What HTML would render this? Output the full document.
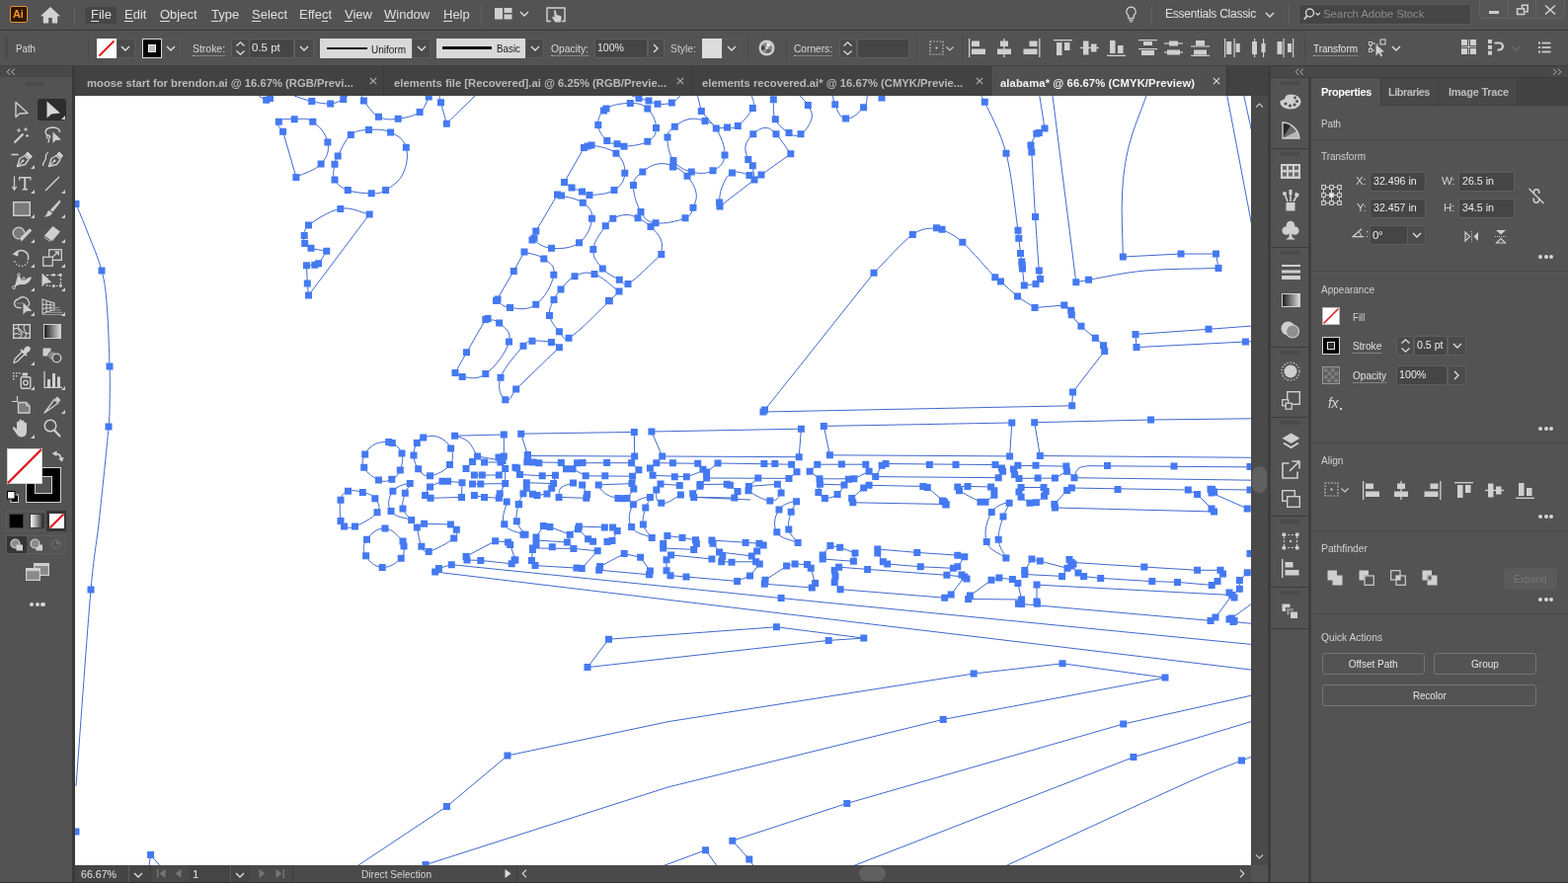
<!DOCTYPE html>
<html lang="en">
<head>
<meta charset="utf-8">
<title>alabama* @ 66.67% (CMYK/Preview)</title>
<style>
*{box-sizing:border-box;margin:0;padding:0}
html,body{width:1588px;height:894px;overflow:hidden;background:#535353}
body{position:relative;font-family:"Liberation Sans","DejaVu Sans",sans-serif;font-size:11px;color:#dcdcdc;-webkit-font-smoothing:antialiased}
.abs{position:absolute}
.t{position:absolute;white-space:nowrap;line-height:1}
svg{position:absolute;overflow:visible}
/* ---------- bars ---------- */
#menubar{left:0;top:0;width:1588px;height:30px;background:#535353}
#menuline{left:0;top:30px;width:1588px;height:1px;background:#383838}
#ctrlbar{left:0;top:31px;width:1588px;height:35px;background:#535353}
#tabbar{left:0;top:66px;width:1588px;height:31px;background:#424242}
#tools{left:0;top:67px;width:73px;height:827px;background:#535353}
#toolshead{left:0;top:67px;width:73px;height:11px;background:#484848}
#toolsgap{left:73px;top:67px;width:3px;height:827px;background:#3a3a3a}
#canvas{left:76px;top:97px;width:1191px;height:779px;background:#fff;overflow:hidden}
#vscroll{left:1267px;top:97px;width:17px;height:779px;background:#4a4a4a}
#status{left:76px;top:876px;width:1208px;height:17px;background:#4a4a4a}
#rgap{left:1284px;top:66px;width:304px;height:828px;background:#3d3d3d}
#rhead{left:1287px;top:67px;width:301px;height:11px;background:#484848}
#strip{left:1287px;top:79px;width:38px;height:815px;background:#535353}
#panel{left:1328px;top:79px;width:260px;height:815px;background:#535353}
.menu{font-size:13px;color:#e0e0e0;top:8px}
.menu u{text-decoration:underline;text-underline-offset:1px}
.lbl{font-size:11px;color:#d8d8d8}
.dot{border-bottom:1px dotted #bdbdbd;padding-bottom:1px}
.field{position:absolute;background:#454545;border:1px solid #5f5f5f;border-radius:2px;color:#e6e6e6;font-size:11px;line-height:1}
.field span{position:absolute;left:3px;top:4px;white-space:nowrap}
.tab{position:absolute;top:67px;height:30px;font-weight:bold;font-size:11.25px;color:#b9b9b9;border-right:1px solid #383838}
.tab span{position:absolute;top:11.5px;white-space:nowrap;line-height:1}
.sec{position:absolute;left:1338px;font-size:11px;color:#d0d0d0;white-space:nowrap;line-height:1}
.div{position:absolute;left:1329px;width:259px;height:1px;background:#484848}
.btn{position:absolute;border:1px solid #767676;border-radius:3px;height:22px;font-size:11px;color:#e6e6e6;text-align:center;line-height:20px}
.more i{position:absolute;width:3px;height:3px;border-radius:50%;background:#d6d6d6;top:0}
</style>
</head>
<body>
<!-- BASE LAYOUT -->
<div class="abs" id="menubar"></div>
<div class="abs" id="menuline"></div>
<div class="abs" id="ctrlbar"></div>
<div class="abs" id="tabbar"></div>
<div class="abs" id="tools"></div>
<div class="abs" id="toolshead"></div>
<div class="abs" id="toolsgap"></div>
<div class="abs" id="canvas"><svg style="left:0;top:0" width="1191" height="779" viewBox="76 97 1191 779">
<g fill="none" stroke="#3f68cf" stroke-width="1">
<path d="M77.0 206.5 C81.3 217.2 85.7 227.2 90.0 238.5 C94.3 249.8 99.7 261.3 103.0 274.0 C106.3 286.7 106.9 292.8 108.3 310.0 C109.7 327.2 110.5 355.8 111.0 371.0 C111.5 386.2 111.4 390.8 111.2 401.0 C111.0 411.2 111.4 415.5 110.0 432.0 C108.1 454.2 103.4 499.2 100.4 526.7 C97.4 554.2 95.3 559.4 92.0 597.0 C88.1 641.9 82.0 729.7 77.0 796.0"/>
<path d="M150.5 880.0 L152.6 865.6 L165.0 880.0"/>
<path d="M262.0 97.0 C264.6 98.4 267.3 100.8 269.7 101.3 C271.9 101.8 272.4 100.3 273.5 99.5 C274.6 98.7 275.2 97.8 276.0 97.0"/>
<path d="M298.0 97.0 C303.9 98.9 309.3 101.2 315.8 102.6 C322.3 104.0 328.8 105.4 334.7 105.0 C340.6 104.6 344.7 101.9 347.8 100.5 C350.4 99.3 350.6 98.2 352.0 97.0"/>
<path d="M366.5 97.0 C367.1 98.7 366.6 99.8 368.4 102.0 C371.5 105.8 376.8 114.7 383.5 118.2 C390.2 121.7 395.6 121.1 403.2 120.2 C410.8 119.3 419.1 117.7 425.1 113.4 C431.1 109.1 432.5 100.9 434.2 98.0 C434.5 97.5 434.4 97.3 434.5 97.0"/>
<path d="M445.0 97.0 C445.5 99.3 445.6 100.2 446.5 103.8 C447.7 108.5 450.4 118.1 452.3 125.2 L481.0 97.0"/>
<path d="M282.3 123.2 C285.7 119.5 292.0 120.7 298.2 120.7 C304.4 120.7 310.1 118.6 316.8 123.2 C323.5 127.8 330.2 135.3 331.9 144.1 C333.6 152.9 331.4 159.1 325.1 166.0 C318.8 172.9 308.3 174.9 299.9 179.4 L286.6 133.3 C285.2 129.9 278.9 126.9 282.3 123.2 Z"/>
<path d="M355.3 136.6 C361.4 131.5 366.2 132.0 373.5 131.5 C380.8 131.0 388.4 130.6 395.6 134.0 C402.8 137.4 408.8 140.6 411.3 149.2 C413.8 157.8 412.0 167.7 408.0 176.0 C404.0 184.3 396.5 188.8 390.6 192.5 C384.7 196.2 383.1 195.8 376.2 195.8 C369.3 195.8 359.2 195.1 352.3 192.5 C345.4 189.9 341.7 187.2 339.0 181.9 C336.3 176.6 338.4 170.6 339.0 166.3 C339.6 162.0 339.9 162.2 342.2 158.0 C345.1 152.7 349.2 141.7 355.3 136.6 Z"/>
<path d="M312.5 299.0 L374.2 216.9 C364.4 215.1 356.5 209.3 344.8 211.4 C333.1 213.5 319.5 222.8 312.5 228.0 C307.6 231.6 308.9 235.2 308.2 238.6 C307.5 242.0 307.3 244.1 308.7 246.6 C310.1 249.1 311.1 249.8 315.0 251.2 C319.0 252.6 325.5 253.2 330.7 254.2 C328.0 258.4 324.8 264.1 322.6 266.8 C321.2 268.5 320.9 267.9 318.8 268.3 C316.6 268.7 313.3 268.6 310.5 268.8 L311.3 287.0 C311.7 291.0 312.1 295.0 312.5 299.0 Z"/>
<path d="M614.0 110.0 C620.6 105.6 630.6 104.5 638.3 104.5 C646.0 104.5 650.6 105.0 655.8 110.0 C661.0 115.0 664.5 122.6 664.5 129.5 C664.5 136.4 662.2 139.6 655.8 143.3 C649.4 147.0 637.7 147.8 632.0 148.3 C628.0 148.6 627.9 146.8 625.0 145.8 C622.1 144.8 618.5 146.2 614.8 142.5 C611.1 138.8 606.0 133.3 605.8 126.5 C605.6 119.7 607.4 114.4 614.0 110.0 Z"/>
<path d="M640.0 97.0 C642.3 97.8 644.0 98.6 647.0 99.5 C650.0 100.4 653.6 101.0 657.0 102.0 C660.4 103.0 661.7 104.9 666.0 105.3 C670.3 105.7 676.0 105.6 680.3 104.0 C684.6 102.4 686.1 99.3 689.0 97.0"/>
<path d="M683.3 128.3 C687.3 124.9 692.2 121.6 698.0 120.5 C703.8 119.4 709.0 120.8 714.0 122.5 C719.0 124.2 721.7 123.7 725.3 130.0 C729.1 136.6 734.7 148.1 734.0 157.0 C733.3 165.9 728.8 169.4 722.0 172.8 C715.2 176.2 707.8 175.9 700.3 174.0 C692.8 172.1 686.7 169.3 682.0 162.5 C677.3 155.7 675.7 145.8 676.0 139.0 C676.3 132.2 679.3 131.7 683.3 128.3 Z"/>
<path d="M706.5 97.0 C707.8 102.2 709.0 107.3 710.3 112.5 L725.3 130.0 C729.0 129.7 732.8 129.4 736.5 129.0 C740.2 128.6 742.7 131.0 747.3 127.5 C752.3 123.7 759.5 115.4 762.3 109.5 C765.1 103.6 761.8 101.2 761.5 97.0"/>
<path d="M650.8 174.0 C655.3 170.0 660.1 167.1 666.0 166.0 C671.9 164.9 676.5 166.0 682.0 168.3 C687.5 170.6 691.8 173.4 696.0 178.3 C700.2 183.2 703.9 188.9 705.0 195.0 C706.1 201.1 704.0 205.6 702.0 210.3 C700.0 215.0 700.5 218.1 694.0 220.8 C686.6 223.8 672.9 227.0 664.0 225.8 C655.1 224.6 653.3 221.8 649.0 214.5 C644.7 207.2 641.1 195.7 641.5 187.5 C641.9 179.3 646.3 178.0 650.8 174.0 Z"/>
<path d="M783.0 97.0 C783.1 98.3 783.1 98.8 783.3 100.8 C783.7 104.8 782.3 114.4 785.3 120.8 C788.3 127.2 794.1 131.6 799.0 134.5 C803.9 137.4 806.0 138.9 811.0 135.8 C816.0 132.7 820.5 125.9 822.0 120.0 C823.5 114.1 820.5 110.7 818.3 106.5 C816.1 102.3 812.8 100.2 810.0 97.0"/>
<path d="M843.5 97.0 C844.3 99.9 843.4 101.6 845.8 105.8 C848.2 110.0 849.1 119.2 856.6 120.0 C864.1 120.8 870.4 113.2 874.6 108.8 C878.8 104.4 877.2 100.9 878.5 97.0"/>
<path d="M757.8 161.5 C756.5 157.9 754.0 153.0 755.0 148.0 C756.0 143.0 759.1 139.2 762.8 135.8 C766.5 132.4 770.1 129.5 775.0 129.5 C779.9 129.5 781.3 131.0 786.0 135.8 C790.7 140.6 795.9 149.1 800.8 155.8 L771.0 177.0 L764.0 182.0 C763.4 177.3 762.9 172.5 762.3 167.8 C760.8 165.7 759.1 165.1 757.8 161.5 Z"/>
<path d="M729.0 209.0 L764.0 182.0 C762.3 180.5 762.4 178.6 759.0 177.5 C754.8 176.2 747.6 172.3 741.5 175.0 C735.4 177.7 733.4 184.5 731.0 190.0 C728.6 195.5 728.9 201.6 728.5 205.0 C728.3 207.1 728.8 207.7 729.0 209.0 Z"/>
<path d="M591.5 149.5 L571.5 184.5 L579.0 190.0 C582.5 191.3 586.3 192.7 589.5 194.0 C592.7 195.3 592.6 197.7 597.0 197.5 C603.1 197.2 614.9 196.9 622.0 192.5 C629.1 188.1 632.4 183.0 632.8 175.3 C633.2 167.6 630.7 160.9 624.0 155.3 C617.3 149.7 605.2 148.1 599.0 147.0 C594.8 146.3 594.0 148.7 591.5 149.5 Z"/>
<path d="M564.5 197.0 L542.8 234.0 L539.0 243.0 C545.5 245.8 549.6 250.8 558.5 251.3 C567.4 251.8 578.2 251.9 586.5 245.8 C594.8 239.7 598.7 229.8 599.5 221.3 C600.3 212.8 596.3 209.8 590.3 205.3 C584.3 200.8 573.1 199.5 568.5 198.0 C566.4 197.3 565.8 197.3 564.5 197.0 Z"/>
<path d="M531.0 255.0 L520.3 274.5 L502.5 304.5 C507.2 306.8 509.0 310.8 516.5 311.5 C524.0 312.2 533.8 315.1 542.8 308.3 C551.8 301.5 559.1 288.4 560.8 278.3 C562.5 268.2 556.5 266.5 550.8 262.0 C545.1 257.5 537.6 257.3 531.0 255.0 Z"/>
<path d="M636.0 287.5 C631.6 290.2 631.7 286.0 627.3 283.3 C622.7 280.6 615.2 277.7 610.3 272.0 C605.4 266.3 600.2 261.4 600.8 252.5 C601.4 243.6 609.7 234.4 613.3 228.8 C616.4 224.0 617.0 223.4 620.8 221.3 C624.6 219.2 629.3 217.6 634.0 217.5 C638.7 217.4 641.5 218.6 646.0 220.8 C650.5 223.0 654.8 225.5 659.0 229.5 C663.2 233.5 667.5 237.7 669.5 243.0 C671.5 248.3 669.7 252.7 669.8 257.5 C658.5 267.5 645.6 281.7 636.0 287.5 Z"/>
<path d="M576.0 342.3 C570.7 345.5 569.9 339.9 566.4 335.7 C562.9 331.5 557.6 325.8 556.5 319.4 C555.4 313.0 558.9 308.1 561.0 303.4 C563.1 298.7 564.3 297.2 568.0 293.0 C571.7 288.8 575.5 282.6 582.0 279.7 C588.5 276.8 593.3 274.5 602.0 277.5 C610.7 280.5 618.7 289.2 627.0 295.0 L617.3 304.8 C603.5 317.3 588.4 334.8 576.0 342.3 Z"/>
<path d="M511.8 404.8 C507.2 401.4 503.4 393.1 507.0 382.3 C510.6 371.5 524.2 357.1 530.0 350.3 C533.6 346.1 533.7 345.9 539.0 345.2 C544.3 344.5 553.4 345.4 558.4 346.6 C563.3 347.8 563.7 350.0 566.4 351.7 L522.7 394.0 C519.1 397.6 516.4 408.2 511.8 404.8 Z"/>
<path d="M491.8 323.4 L472.5 356.8 L461.0 377.5 C463.4 378.8 463.8 381.3 468.2 381.5 C474.0 381.7 482.4 385.6 491.8 378.6 C501.2 371.6 512.5 357.3 515.5 346.0 C518.5 335.0 510.3 331.5 505.6 327.0 C500.9 322.5 496.4 324.6 491.8 323.4 Z"/>
<path d="M993.5 97.0 C994.8 99.1 995.7 99.7 997.3 103.3 C1001.8 113.6 1013.0 132.1 1019.0 155.3 C1025.0 178.5 1028.7 218.1 1031.0 233.3 C1031.6 237.5 1031.4 237.4 1031.8 241.3 C1032.2 245.2 1033.0 252.6 1033.5 256.5 C1034.0 260.4 1034.4 262.3 1034.8 265.0 C1035.2 267.7 1035.1 268.3 1035.5 272.0 C1035.9 276.0 1036.7 283.3 1037.3 289.0 L1049.0 287.5 C1050.5 285.8 1052.8 285.2 1053.5 282.5 C1054.2 279.8 1052.7 278.6 1052.3 274.0 C1051.4 262.9 1049.8 239.5 1048.5 219.5 C1047.2 199.5 1045.6 166.8 1044.8 154.0 C1044.6 150.2 1043.1 150.5 1044.0 147.0 C1044.9 143.5 1048.2 137.8 1049.8 135.3 C1050.6 134.1 1051.1 135.3 1052.3 134.5 C1053.8 133.5 1056.1 131.5 1058.0 130.0 L1052.8 97.0"/>
<path d="M1066.0 97.0 L1089.8 285.8 L1102.5 283.3"/>
<path d="M1161.0 97.0 C1155.2 113.7 1147.9 129.2 1143.5 147.0 C1139.1 164.8 1137.6 177.0 1136.5 197.0 C1135.4 217.0 1137.0 239.0 1137.3 260.0 L1196.0 257.0 L1231.5 257.0 L1234.0 271.5 C1209.3 272.3 1183.3 271.9 1160.0 274.0 C1136.7 276.1 1121.7 280.2 1102.5 283.3"/>
<path d="M1242.8 97.0 L1268.0 229.5"/>
<path d="M1259.8 97.0 L1268.0 134.5"/>
<path d="M1268.0 330.0 L1224.0 333.3 L1150.0 338.5 L1151.0 351.6 L1261.4 346.0 L1268.0 345.7"/>
<path d="M773.0 417.0 L885.0 276.3 C898.1 263.4 912.6 245.9 924.3 237.5 C935.2 229.7 943.0 231.8 948.5 230.8 C951.5 230.3 951.3 230.8 954.0 232.3 C958.7 234.9 965.2 236.6 974.8 245.3 C984.4 254.0 1000.9 273.7 1007.8 280.8 C1010.4 283.5 1010.6 282.6 1013.5 285.0 C1017.5 288.4 1024.4 295.3 1030.5 300.0 C1036.6 304.7 1042.2 307.7 1048.0 311.5 L1077.8 309.0 C1080.1 310.7 1083.2 312.3 1084.7 314.2 C1086.2 316.1 1084.0 316.7 1085.3 318.7 C1087.2 321.7 1090.7 326.1 1095.0 330.3 C1099.3 334.5 1105.5 339.1 1109.3 342.3 C1113.0 345.6 1115.7 347.3 1117.5 349.8 C1119.3 352.3 1118.3 353.5 1118.7 355.4 L1086.5 397.0 L1085.7 410.8 L773.0 417.0 Z"/>
<path d="M457.3 571.7 L444.4 575.4 L440.7 579.0 L1268.0 678.2"/>
<path d="M457.3 571.7 L791.1 605.6 L1268.0 652.5"/>
<path d="M616.5 647.2 L786.4 634.8 L874.8 646.1 L839.2 648.4 L595.0 675.6 C602.2 666.1 609.3 656.7 616.5 647.2 Z"/>
<path d="M1180.0 686.1 L1076.0 671.8 L986.2 682.0 L677.0 730.6 L514.0 765.0 L452.5 816.5 L360.0 878.0"/>
<path d="M1180.0 686.1 L955.2 728.4 L677.0 796.8 L431.0 875.5 L424.0 878.0"/>
<path d="M1268.0 704.0 L1137.7 733.0 L857.8 813.4 L741.8 851.2 L758.8 870.0 L764.0 878.0"/>
<path d="M668.0 878.0 L714.6 860.7 L727.0 878.0"/>
<path d="M1268.0 730.3 L1147.9 766.6 L860.8 878.0"/>
<path d="M1268.0 766.0 L1257.5 770.0 C1240.7 776.8 1233.5 778.5 1207.0 790.3 C1166.7 808.3 1079.5 848.8 1015.7 878.0"/>
<path d="M393.7 447.5 C395.7 447.4 395.8 447.1 397.3 448.4 C399.8 450.6 405.4 453.5 407.0 459.0 C408.6 464.5 407.2 471.0 405.3 476.0 C403.4 481.0 401.1 483.3 396.8 485.3 C392.5 487.3 389.0 488.3 383.5 486.0 C378.0 483.7 371.5 478.6 368.7 473.3 C365.9 468.0 367.5 464.6 369.7 460.0 C371.9 455.4 375.4 451.9 380.0 449.5 C384.6 447.1 390.6 447.7 393.7 447.5 Z"/>
<path d="M428.7 443.0 C424.6 444.1 424.1 445.0 422.3 448.4 C420.5 451.8 418.7 456.1 419.0 461.0 C419.3 465.9 420.5 470.8 423.7 474.8 C426.9 478.8 428.7 482.7 435.5 481.8 C442.3 480.9 451.1 476.4 455.5 470.6 C459.9 464.8 458.9 459.7 456.6 454.0 C454.3 448.3 449.5 444.7 444.0 442.5 C438.5 440.3 432.8 441.9 428.7 443.0 Z"/>
<path d="M352.5 497.3 C357.1 495.7 362.4 497.1 367.3 498.4 C372.2 499.7 376.8 500.5 379.8 504.7 C382.8 508.9 386.4 512.6 382.0 518.7 C377.5 525.0 365.7 530.3 359.5 533.0 C354.1 535.3 351.6 534.2 348.5 533.0 C345.4 531.8 345.5 530.9 345.0 527.4 C344.3 522.4 343.6 512.0 345.0 506.2 C346.4 500.4 347.9 498.9 352.5 497.3 Z"/>
<path d="M390.0 535.0 C381.8 534.6 375.5 540.4 371.5 546.2 C367.5 552.0 367.3 556.8 370.6 562.8 C373.9 568.8 379.6 573.9 387.2 574.4 C394.8 574.9 401.8 569.6 406.2 565.2 C410.6 560.8 408.7 556.0 409.0 552.9 C409.3 550.2 409.9 549.8 408.0 548.0 C404.3 544.5 398.2 535.4 390.0 535.0 Z"/>
<path d="M415.2 489.6 C413.1 489.3 402.0 491.3 397.9 497.3 C393.8 503.3 391.6 510.8 396.0 517.6 C400.4 524.4 409.8 523.5 416.7 526.5 C413.8 522.7 409.3 520.4 408.0 515.0 C406.7 509.6 409.0 503.8 410.3 499.2 C411.6 494.6 417.3 489.9 415.2 489.6 Z"/>
<path d="M422.3 533.9 L429.6 530.2 L456.4 531.0 C458.4 532.8 461.6 533.2 462.3 536.3 C463.0 539.4 463.5 542.0 459.7 545.0 C454.2 549.3 441.4 556.6 434.2 558.4 C429.6 559.6 429.0 557.5 426.9 553.2 C424.6 548.5 423.8 540.3 422.3 533.9 Z"/>
<path d="M435.5 493.0 C438.8 490.3 443.8 489.1 448.0 487.2 L453.6 487.2 L468.0 488.7 L467.5 503.4 L436.0 504.3 L430.6 501.6 C432.2 498.7 432.2 495.7 435.5 493.0 Z"/>
<path d="M483.5 462.0 C480.3 457.0 478.3 450.9 474.0 447.0 C469.7 443.1 465.1 443.1 460.6 441.2 L510.3 440.0 L510.3 462.0"/>
<path d="M534.4 460.4 L527.7 439.2 L642.3 437.4 L642.7 462.0 L534.4 461.5"/>
<path d="M670.7 462.0 L659.9 437.0 L811.4 434.2 L809.2 462.7 L670.7 462.0 Z"/>
<path d="M840.4 460.8 L834.3 431.4 L1024.8 428.0 L1022.6 461.9 L840.4 460.8 Z"/>
<path d="M1268.0 463.3 L1053.3 461.5 L1047.7 427.7 L1165.6 425.0 L1268.0 423.8"/>
<path d="M483.5 462.0 L478.5 467.4 L472.0 474.4"/>
<path d="M483.5 462.0 L509.0 466.5"/>
<path d="M490.5 468.0 L507.0 468.0"/>
<path d="M480.4 481.0 L505.3 481.0"/>
<path d="M478.5 490.0 L511.7 489.6"/>
<path d="M480.4 501.6 L490.5 503.4 L505.3 504.3"/>
<path d="M511.7 474.4 L511.7 489.6 L506.2 499.7"/>
<path d="M513.2 508.0 C512.4 515.6 507.0 523.2 510.8 530.7 C514.6 538.2 523.6 537.7 530.0 541.2"/>
<path d="M533.8 467.8 L568.3 468.4 L573.5 474.8 L580.0 474.8 L584.6 468.7 L639.6 468.7 L646.9 475.7 L640.5 482.2"/>
<path d="M526.5 480.4 L549.2 481.8 L562.4 481.3"/>
<path d="M580.0 474.8 L593.2 481.8 L640.5 482.2"/>
<path d="M533.3 488.7 L560.6 489.6 L562.4 481.3"/>
<path d="M558.7 494.2 L554.0 500.0"/>
<path d="M533.3 494.2 L539.4 500.3 L544.0 501.6 L554.0 500.0"/>
<path d="M566.0 503.4 C566.7 500.3 565.0 497.0 568.0 494.0 C571.0 491.0 576.3 490.7 580.5 489.0"/>
<path d="M566.0 503.4 L593.8 504.3"/>
<path d="M589.7 490.9 L594.7 500.6"/>
<path d="M606.2 490.9 L640.0 489.6 L641.8 495.1 L635.0 504.5"/>
<path d="M606.2 493.0 C609.1 495.7 611.4 498.9 615.0 501.0 C618.6 503.1 622.3 503.3 626.0 504.5"/>
<path d="M530.0 499.7 C528.4 503.3 526.4 505.4 525.2 510.4 C524.0 515.4 522.0 521.9 523.3 527.8 C524.6 533.7 529.1 536.7 532.0 541.2"/>
<path d="M658.4 503.4 C656.3 502.9 645.5 504.3 641.4 510.8 C637.3 517.3 635.4 526.0 639.6 533.5 C643.8 541.0 653.3 540.9 660.2 544.6 C657.3 540.1 652.6 536.9 651.4 531.0 C650.2 525.1 652.5 518.9 653.8 514.0 C655.1 509.1 660.5 503.9 658.4 503.4 Z"/>
<path d="M670.7 462.0 L664.8 468.7 L658.4 473.9 L661.1 481.3 L695.3 482.7"/>
<path d="M664.8 468.7 L706.7 469.3 L711.9 475.2 L715.6 484.0 L709.0 492.3 L701.7 499.7"/>
<path d="M669.0 490.0 L688.3 491.4"/>
<path d="M669.0 490.0 C667.6 492.0 664.6 492.1 664.8 496.0 C665.0 500.0 662.8 507.9 669.8 509.3 C676.8 510.7 682.9 503.8 689.4 501.0"/>
<path d="M702.7 503.4 L760.0 506.0"/>
<path d="M695.3 482.7 C698.9 481.5 703.0 480.3 706.0 479.0 C709.0 477.7 709.9 476.5 711.9 475.2"/>
<path d="M543.0 544.0 L550.4 532.6 L556.9 533.5 C563.7 536.1 570.4 538.6 577.2 541.2"/>
<path d="M543.0 544.0 L543.0 551.4 L539.4 556.4 L538.5 567.4 L542.0 572.6 L589.2 575.4 L605.2 557.8 L580.9 555.4 L539.4 555.0"/>
<path d="M543.0 547.0 L574.4 549.0 L577.2 541.2 L586.4 533.0 L612.3 533.9"/>
<path d="M585.5 535.7 L595.6 545.8 L600.6 548.2"/>
<path d="M620.6 533.9 L625.2 537.5 L620.0 547.5 L615.0 548.6"/>
<path d="M607.6 573.5 L632.2 560.6 L648.6 564.3 L658.4 578.0 L657.5 581.8 L606.7 577.2 C607.0 576.0 607.3 574.7 607.6 573.5 Z"/>
<path d="M671.7 550.5 L675.9 542.5 L691.0 544.4 L704.5 546.8 L705.4 550.5 L702.7 556.4 L671.7 555.0 C671.7 553.5 671.7 552.0 671.7 550.5 Z"/>
<path d="M720.9 566.0 L679.6 561.9 L675.0 566.7 L675.0 577.8 L679.0 582.7 L695.0 584.0 L746.6 588.4"/>
<path d="M715.6 478.0 C719.4 475.0 723.2 472.0 727.0 469.0 L801.6 470.2 L807.0 477.8 L799.0 484.4 L715.6 484.0"/>
<path d="M709.0 490.5 L736.2 490.2 L739.4 491.3 L747.0 497.4 L743.8 504.0 L702.7 503.4"/>
<path d="M758.4 492.4 L787.4 490.2 C788.6 493.1 793.0 494.9 791.1 499.0 C789.2 503.1 786.9 507.5 779.8 507.0 C772.7 506.5 762.9 500.2 758.0 496.8 C756.1 495.5 758.3 493.9 758.4 492.4 Z"/>
<path d="M758.4 492.4 L767.8 484.1"/>
<path d="M806.6 507.7 C804.6 507.3 793.2 509.4 789.0 516.0 C784.8 522.6 782.5 531.1 786.8 538.7 C791.1 546.3 801.0 546.0 808.1 549.6 C805.0 545.1 800.1 542.1 798.8 536.0 C797.5 529.9 799.8 523.3 801.2 518.2 C802.6 513.1 808.6 508.1 806.6 507.7 Z"/>
<path d="M820.1 477.2 C822.7 474.9 825.2 472.5 827.8 470.2 L876.8 470.2 L880.1 477.2 L886.7 482.6 L1011.2 483.7"/>
<path d="M820.1 477.2 C823.4 479.7 826.7 482.3 830.0 484.8 L864.9 484.8 C870.0 482.3 875.0 479.7 880.1 477.2"/>
<path d="M886.7 482.6 L893.2 471.3 L897.1 469.5 L1008.0 470.6"/>
<path d="M830.4 490.2 L855.0 490.9 L859.4 485.2"/>
<path d="M830.4 490.2 L828.9 498.5 C831.1 500.5 831.3 504.0 835.4 504.4 C839.5 504.8 844.4 503.1 848.1 500.5 C851.8 497.9 852.7 494.1 855.0 490.9"/>
<path d="M862.7 504.4 C866.7 500.9 870.7 497.5 874.7 494.0 L880.1 491.3 L934.9 492.4 L939.3 493.5 L956.3 508.0 L958.0 510.5 L863.8 508.8"/>
<path d="M720.9 547.0 L768.9 550.2 L773.2 552.0 L766.7 557.9 L761.3 562.9 L728.5 559.0 L722.0 550.2"/>
<path d="M728.5 559.0 L731.8 563.3 L730.7 568.8 L765.6 568.8 L769.3 571.0 L759.5 583.0 C755.2 584.8 750.9 586.6 746.6 588.4"/>
<path d="M775.0 587.3 L796.6 573.1 L805.1 571.0 L817.5 571.6 L821.2 575.3 L825.6 590.6 L822.3 595.0 L774.3 591.2 C774.5 589.9 774.8 588.6 775.0 587.3 Z"/>
<path d="M833.2 562.0 C834.7 559.4 838.3 555.6 840.9 552.4 L850.7 554.2 C855.8 556.1 860.9 558.1 866.0 560.0 L864.4 568.3 L833.2 566.0 C833.2 564.7 832.1 563.9 833.2 562.0 Z"/>
<path d="M888.8 556.0 L928.8 559.4 L969.8 562.2 L976.8 563.7 L969.8 573.8 L965.4 575.3 L932.3 573.8 L898.7 571.0 L894.3 568.8 L888.8 560.0 C888.8 558.7 888.8 557.3 888.8 556.0 Z"/>
<path d="M849.6 574.2 L878.6 576.4 L958.9 582.3"/>
<path d="M849.6 574.2 L845.2 577.5 L845.2 589.5 L851.1 596.7 L956.7 605.2 L963.2 602.0 L976.8 584.0 L958.9 582.3"/>
<path d="M1008.0 470.6 C1010.2 471.7 1013.0 472.7 1014.5 474.0 C1015.9 475.2 1016.2 475.5 1015.6 477.2 C1014.9 479.2 1012.7 481.5 1011.2 483.7"/>
<path d="M969.8 492.9 L980.0 492.4 L1003.6 493.0 L1006.9 496.8 L1006.9 501.2 L998.0 508.3 L993.0 508.3 C985.8 504.5 975.9 499.7 971.5 496.8 C969.6 495.5 970.4 494.2 969.8 492.9 Z"/>
<path d="M1022.1 509.2 C1020.1 508.5 1009.0 510.6 1004.3 518.6 C999.6 526.6 996.1 538.6 999.2 548.5 C1002.3 558.4 1012.3 559.5 1018.9 565.0 C1016.3 558.8 1011.7 554.2 1011.2 546.3 C1010.7 538.4 1014.1 529.6 1016.0 523.0 C1017.9 516.4 1024.0 509.9 1022.1 509.2 Z"/>
<path d="M1032.0 484.4 C1030.5 483.1 1028.6 482.2 1027.6 480.4 C1026.6 478.6 1025.8 477.0 1026.5 475.0 C1027.2 473.0 1029.4 472.5 1030.9 471.3 L1079.9 472.1 L1080.6 477.2 C1076.5 479.5 1072.5 481.8 1068.4 484.1 L1032.0 484.4"/>
<path d="M1080.6 477.2 L1088.0 483.7 C1089.3 480.6 1089.2 476.9 1092.0 474.5 C1094.8 472.1 1098.7 472.6 1102.0 471.7 L1268.0 472.9"/>
<path d="M1088.0 483.7 L1268.0 486.2"/>
<path d="M1034.1 493.5 L1057.0 493.5 C1057.7 494.8 1059.1 495.7 1059.2 497.4 C1059.3 499.1 1059.3 500.1 1057.5 502.2 C1055.7 504.3 1052.1 506.6 1049.4 508.8 L1042.9 509.2 C1040.0 507.2 1036.2 505.4 1034.1 503.3 C1032.0 501.2 1032.0 499.8 1032.0 497.9 C1032.0 496.0 1033.4 495.0 1034.1 493.5 Z"/>
<path d="M1067.9 510.5 L1080.6 496.4 L1085.4 494.0 L1203.3 496.0 L1212.6 500.6 L1227.0 515.0 L1229.5 518.0 L1068.5 514.0 C1068.3 512.8 1068.1 511.7 1067.9 510.5 Z"/>
<path d="M1268.0 496.0 L1227.7 495.5 L1227.0 499.0 L1263.2 514.9 L1268.0 515.5"/>
<path d="M982.4 603.0 L1004.0 587.3 L1011.9 585.1 L1025.4 586.6 L1030.9 590.6 L1034.6 607.0 L980.7 606.5 C981.3 605.3 981.8 604.2 982.4 603.0 Z"/>
<path d="M1037.8 577.5 C1040.2 573.7 1042.6 569.9 1045.0 566.1 L1053.3 568.1 L1081.0 575.3 L1085.0 569.4 L1158.8 574.0 L1212.6 577.3 L1236.0 577.3 L1238.5 581.0 L1233.0 588.6 L1227.2 592.4 L1192.5 589.4 L1166.8 588.6 L1114.7 585.4 L1097.6 583.6 L1092.0 580.1 L1085.0 573.0"/>
<path d="M1037.8 581.5 L1075.6 583.4 L1081.0 575.3"/>
<path d="M1050.0 609.0 L1050.0 592.1 L1247.8 602.5 L1231.0 625.1 L1226.0 628.4 L1034.6 611.5"/>
<path d="M1268.0 579.0 L1263.2 579.8 L1255.4 587.4 L1255.4 596.2 L1247.8 602.5"/>
<path d="M1268.0 611.0 L1247.3 626.0 L1249.0 629.5 L1268.0 631.4"/>
<path d="M472.0 563.4 L501.6 547.7 L514.5 549.0 L516.7 551.4 L521.9 567.0 L518.2 570.8 L486.8 567.4 L473.0 567.0 C472.7 565.8 472.3 564.6 472.0 563.4 Z"/>
</g>
<path fill="#4479f2" d="M73.5 203.0h7v7h-7zM99.5 270.5h7v7h-7zM107.5 367.5h7v7h-7zM106.5 428.5h7v7h-7zM88.5 593.5h7v7h-7zM149.1 862.1h7v7h-7zM266.2 97.8h7v7h-7zM270.0 96.0h7v7h-7zM312.3 99.1h7v7h-7zM331.2 101.5h7v7h-7zM344.3 97.0h7v7h-7zM364.9 98.5h7v7h-7zM380.0 114.7h7v7h-7zM399.7 116.7h7v7h-7zM421.6 109.9h7v7h-7zM430.7 94.5h7v7h-7zM443.0 100.3h7v7h-7zM448.8 121.7h7v7h-7zM278.8 119.7h7v7h-7zM294.7 117.2h7v7h-7zM313.3 119.7h7v7h-7zM328.4 140.6h7v7h-7zM321.6 162.5h7v7h-7zM296.4 175.9h7v7h-7zM283.1 129.8h7v7h-7zM351.8 133.1h7v7h-7zM370.0 128.0h7v7h-7zM392.1 130.5h7v7h-7zM407.8 145.7h7v7h-7zM387.1 189.0h7v7h-7zM372.7 192.3h7v7h-7zM348.8 189.0h7v7h-7zM335.5 178.4h7v7h-7zM335.5 162.8h7v7h-7zM338.7 154.5h7v7h-7zM309.0 295.5h7v7h-7zM370.7 213.4h7v7h-7zM341.3 207.9h7v7h-7zM309.0 224.5h7v7h-7zM304.7 235.1h7v7h-7z"/>
<path fill="#4479f2" d="M305.2 243.1h7v7h-7zM311.5 247.7h7v7h-7zM327.2 250.7h7v7h-7zM319.1 263.3h7v7h-7zM315.3 264.8h7v7h-7zM307.0 265.3h7v7h-7zM307.8 283.5h7v7h-7zM610.5 106.5h7v7h-7zM634.8 101.0h7v7h-7zM652.3 106.5h7v7h-7zM661.0 126.0h7v7h-7zM652.3 139.8h7v7h-7zM628.5 144.8h7v7h-7zM621.5 142.3h7v7h-7zM611.3 139.0h7v7h-7zM602.3 123.0h7v7h-7zM643.5 96.0h7v7h-7zM653.5 98.5h7v7h-7zM662.5 101.8h7v7h-7zM676.8 100.5h7v7h-7zM679.8 124.8h7v7h-7zM710.5 119.0h7v7h-7zM721.8 126.5h7v7h-7zM730.5 153.5h7v7h-7zM718.5 169.3h7v7h-7zM696.8 170.5h7v7h-7zM678.5 159.0h7v7h-7zM672.5 135.5h7v7h-7zM706.8 109.0h7v7h-7zM733.0 125.5h7v7h-7zM743.8 124.0h7v7h-7zM758.8 106.0h7v7h-7zM647.3 170.5h7v7h-7zM678.5 164.8h7v7h-7zM692.5 174.8h7v7h-7zM698.5 206.8h7v7h-7zM690.5 217.3h7v7h-7zM660.5 222.3h7v7h-7zM645.5 211.0h7v7h-7zM638.0 184.0h7v7h-7z"/>
<path fill="#4479f2" d="M779.8 97.3h7v7h-7zM781.8 117.3h7v7h-7zM795.5 131.0h7v7h-7zM807.5 132.3h7v7h-7zM814.8 103.0h7v7h-7zM842.3 102.3h7v7h-7zM853.1 116.5h7v7h-7zM871.1 105.3h7v7h-7zM754.3 158.0h7v7h-7zM759.3 132.3h7v7h-7zM782.5 132.3h7v7h-7zM797.3 152.3h7v7h-7zM767.5 173.5h7v7h-7zM760.5 178.5h7v7h-7zM758.8 164.3h7v7h-7zM725.5 205.5h7v7h-7zM755.5 174.0h7v7h-7zM738.0 171.5h7v7h-7zM725.0 201.5h7v7h-7zM588.0 146.0h7v7h-7zM568.0 181.0h7v7h-7zM575.5 186.5h7v7h-7zM586.0 190.5h7v7h-7zM593.5 194.0h7v7h-7zM618.5 189.0h7v7h-7zM629.3 171.8h7v7h-7zM620.5 151.8h7v7h-7zM595.5 143.5h7v7h-7zM561.0 193.5h7v7h-7zM539.3 230.5h7v7h-7zM535.5 239.5h7v7h-7zM555.0 247.8h7v7h-7zM583.0 242.3h7v7h-7zM596.0 217.8h7v7h-7zM586.8 201.8h7v7h-7zM565.0 194.5h7v7h-7zM527.5 251.5h7v7h-7zM516.8 271.0h7v7h-7zM499.0 301.0h7v7h-7zM513.0 308.0h7v7h-7z"/>
<path fill="#4479f2" d="M539.3 304.8h7v7h-7zM557.3 274.8h7v7h-7zM547.3 258.5h7v7h-7zM632.5 284.0h7v7h-7zM623.8 279.8h7v7h-7zM606.8 268.5h7v7h-7zM597.3 249.0h7v7h-7zM609.8 225.3h7v7h-7zM617.3 217.8h7v7h-7zM642.5 217.3h7v7h-7zM655.5 226.0h7v7h-7zM666.3 254.0h7v7h-7zM572.5 338.8h7v7h-7zM562.9 332.2h7v7h-7zM553.0 315.9h7v7h-7zM557.5 299.9h7v7h-7zM564.5 289.5h7v7h-7zM578.5 276.2h7v7h-7zM598.5 274.0h7v7h-7zM623.5 291.5h7v7h-7zM613.8 301.3h7v7h-7zM508.3 401.3h7v7h-7zM503.5 378.8h7v7h-7zM526.5 346.8h7v7h-7zM535.5 341.7h7v7h-7zM554.9 343.1h7v7h-7zM562.9 348.2h7v7h-7zM519.2 390.5h7v7h-7zM488.3 319.9h7v7h-7zM469.0 353.3h7v7h-7zM457.5 374.0h7v7h-7zM464.7 378.0h7v7h-7zM488.3 375.1h7v7h-7zM512.0 342.5h7v7h-7zM502.1 323.5h7v7h-7zM993.8 99.8h7v7h-7zM1015.5 151.8h7v7h-7zM1027.5 229.8h7v7h-7zM1028.3 237.8h7v7h-7zM1030.0 253.0h7v7h-7z"/>
<path fill="#4479f2" d="M1031.3 261.5h7v7h-7zM1032.0 268.5h7v7h-7zM1033.8 285.5h7v7h-7zM1045.5 284.0h7v7h-7zM1050.0 279.0h7v7h-7zM1048.8 270.5h7v7h-7zM1045.0 216.0h7v7h-7zM1041.3 150.5h7v7h-7zM1040.5 143.5h7v7h-7zM1046.3 131.8h7v7h-7zM1048.8 131.0h7v7h-7zM1054.5 126.5h7v7h-7zM1086.3 282.3h7v7h-7zM1099.0 279.8h7v7h-7zM1133.8 256.5h7v7h-7zM1192.5 253.5h7v7h-7zM1228.0 253.5h7v7h-7zM1230.5 268.0h7v7h-7zM1220.5 329.8h7v7h-7zM1146.5 335.0h7v7h-7zM1147.5 348.1h7v7h-7zM1257.9 342.5h7v7h-7zM769.5 413.5h7v7h-7zM881.5 272.8h7v7h-7zM920.8 234.0h7v7h-7zM945.0 227.3h7v7h-7zM950.5 228.8h7v7h-7zM971.3 241.8h7v7h-7zM1004.3 277.3h7v7h-7zM1010.0 281.5h7v7h-7zM1027.0 296.5h7v7h-7zM1044.5 308.0h7v7h-7zM1074.3 305.5h7v7h-7zM1081.2 310.7h7v7h-7zM1081.8 315.2h7v7h-7zM1091.5 326.8h7v7h-7zM1105.8 338.8h7v7h-7zM1114.0 346.3h7v7h-7zM1115.2 351.9h7v7h-7zM1083.0 393.5h7v7h-7z"/>
<path fill="#4479f2" d="M1082.2 407.3h7v7h-7zM453.8 568.2h7v7h-7zM440.9 571.9h7v7h-7zM437.2 575.5h7v7h-7zM787.6 602.1h7v7h-7zM613.0 643.7h7v7h-7zM782.9 631.3h7v7h-7zM871.3 642.6h7v7h-7zM835.7 644.9h7v7h-7zM591.5 672.1h7v7h-7zM1176.5 682.6h7v7h-7zM1072.5 668.3h7v7h-7zM982.7 678.5h7v7h-7zM510.5 761.5h7v7h-7zM449.0 813.0h7v7h-7zM951.7 724.9h7v7h-7zM427.5 872.0h7v7h-7zM1134.2 729.5h7v7h-7zM854.3 809.9h7v7h-7zM738.3 847.7h7v7h-7zM755.3 866.5h7v7h-7zM711.1 857.2h7v7h-7zM1144.4 763.1h7v7h-7zM1254.0 766.5h7v7h-7zM390.2 444.0h7v7h-7zM393.8 444.9h7v7h-7zM403.5 455.5h7v7h-7zM401.8 472.5h7v7h-7zM393.3 481.8h7v7h-7zM380.0 482.5h7v7h-7zM365.2 469.8h7v7h-7zM366.2 456.5h7v7h-7zM425.2 439.5h7v7h-7zM418.8 444.9h7v7h-7zM415.5 457.5h7v7h-7zM420.2 471.3h7v7h-7zM432.0 478.3h7v7h-7zM452.0 467.1h7v7h-7zM453.1 450.5h7v7h-7zM349.0 493.8h7v7h-7z"/>
<path fill="#4479f2" d="M363.8 494.9h7v7h-7zM376.3 501.2h7v7h-7zM378.5 515.2h7v7h-7zM356.0 529.5h7v7h-7zM345.0 529.5h7v7h-7zM341.5 523.9h7v7h-7zM341.5 502.7h7v7h-7zM386.5 531.5h7v7h-7zM368.0 542.7h7v7h-7zM367.1 559.3h7v7h-7zM383.7 570.9h7v7h-7zM402.7 561.7h7v7h-7zM405.5 549.4h7v7h-7zM404.5 544.5h7v7h-7zM411.7 486.1h7v7h-7zM394.4 493.8h7v7h-7zM392.5 514.1h7v7h-7zM413.2 523.0h7v7h-7zM404.5 511.5h7v7h-7zM406.8 495.7h7v7h-7zM418.8 530.4h7v7h-7zM426.1 526.7h7v7h-7zM452.9 527.5h7v7h-7zM458.8 532.8h7v7h-7zM456.2 541.5h7v7h-7zM430.7 554.9h7v7h-7zM423.4 549.7h7v7h-7zM432.0 489.5h7v7h-7zM444.5 483.7h7v7h-7zM450.1 483.7h7v7h-7zM464.5 485.2h7v7h-7zM464.0 499.9h7v7h-7zM432.5 500.8h7v7h-7zM427.1 498.1h7v7h-7zM480.0 458.5h7v7h-7zM457.1 437.7h7v7h-7zM506.8 436.5h7v7h-7zM506.8 458.5h7v7h-7zM530.9 456.9h7v7h-7zM524.2 435.7h7v7h-7z"/>
<path fill="#4479f2" d="M638.8 433.9h7v7h-7zM639.2 458.5h7v7h-7zM530.9 458.0h7v7h-7zM667.2 458.5h7v7h-7zM656.4 433.5h7v7h-7zM807.9 430.7h7v7h-7zM805.7 459.2h7v7h-7zM836.9 457.3h7v7h-7zM830.8 427.9h7v7h-7zM1021.3 424.5h7v7h-7zM1019.1 458.4h7v7h-7zM1049.8 458.0h7v7h-7zM1044.2 424.2h7v7h-7zM1162.1 421.5h7v7h-7zM475.0 463.9h7v7h-7zM468.5 470.9h7v7h-7zM505.5 463.0h7v7h-7zM487.0 464.5h7v7h-7zM503.5 464.5h7v7h-7zM476.9 477.5h7v7h-7zM501.8 477.5h7v7h-7zM475.0 486.5h7v7h-7zM508.2 486.1h7v7h-7zM476.9 498.1h7v7h-7zM487.0 499.9h7v7h-7zM501.8 500.8h7v7h-7zM508.2 470.9h7v7h-7zM502.7 496.2h7v7h-7zM509.7 504.5h7v7h-7zM507.3 527.2h7v7h-7zM526.5 537.7h7v7h-7zM530.3 464.3h7v7h-7zM564.8 464.9h7v7h-7zM570.0 471.3h7v7h-7zM576.5 471.3h7v7h-7zM581.1 465.2h7v7h-7zM636.1 465.2h7v7h-7zM643.4 472.2h7v7h-7zM637.0 478.7h7v7h-7zM523.0 476.9h7v7h-7z"/>
<path fill="#4479f2" d="M545.7 478.3h7v7h-7zM558.9 477.8h7v7h-7zM589.7 478.3h7v7h-7zM529.8 485.2h7v7h-7zM557.1 486.1h7v7h-7zM555.2 490.7h7v7h-7zM550.5 496.5h7v7h-7zM529.8 490.7h7v7h-7zM535.9 496.8h7v7h-7zM540.5 498.1h7v7h-7zM562.5 499.9h7v7h-7zM577.0 485.5h7v7h-7zM590.3 500.8h7v7h-7zM586.2 487.4h7v7h-7zM591.2 497.1h7v7h-7zM602.7 487.4h7v7h-7zM636.5 486.1h7v7h-7zM638.3 491.6h7v7h-7zM631.5 501.0h7v7h-7zM622.5 501.0h7v7h-7zM526.5 496.2h7v7h-7zM521.7 506.9h7v7h-7zM519.8 524.3h7v7h-7zM528.5 537.7h7v7h-7zM654.9 499.9h7v7h-7zM637.9 507.3h7v7h-7zM636.1 530.0h7v7h-7zM656.7 541.1h7v7h-7zM647.9 527.5h7v7h-7zM650.3 510.5h7v7h-7zM661.3 465.2h7v7h-7zM654.9 470.4h7v7h-7zM657.6 477.8h7v7h-7zM691.8 479.2h7v7h-7zM703.2 465.8h7v7h-7zM708.4 471.7h7v7h-7zM712.1 480.5h7v7h-7zM705.5 488.8h7v7h-7zM698.2 496.2h7v7h-7zM665.5 486.5h7v7h-7z"/>
<path fill="#4479f2" d="M684.8 487.9h7v7h-7zM661.3 492.5h7v7h-7zM666.3 505.8h7v7h-7zM685.9 497.5h7v7h-7zM699.2 499.9h7v7h-7zM539.5 540.5h7v7h-7zM546.9 529.1h7v7h-7zM553.4 530.0h7v7h-7zM573.7 537.7h7v7h-7zM539.5 547.9h7v7h-7zM535.9 552.9h7v7h-7zM535.0 563.9h7v7h-7zM538.5 569.1h7v7h-7zM585.7 571.9h7v7h-7zM601.7 554.3h7v7h-7zM577.4 551.9h7v7h-7zM535.9 551.5h7v7h-7zM539.5 543.5h7v7h-7zM570.9 545.5h7v7h-7zM582.9 529.5h7v7h-7zM608.8 530.4h7v7h-7zM582.0 532.2h7v7h-7zM592.1 542.3h7v7h-7zM597.1 544.7h7v7h-7zM617.1 530.4h7v7h-7zM621.7 534.0h7v7h-7zM616.5 544.0h7v7h-7zM611.5 545.1h7v7h-7zM604.1 570.0h7v7h-7zM628.7 557.1h7v7h-7zM645.1 560.8h7v7h-7zM654.9 574.5h7v7h-7zM654.0 578.3h7v7h-7zM603.2 573.7h7v7h-7zM668.2 547.0h7v7h-7zM672.4 539.0h7v7h-7zM687.5 540.9h7v7h-7zM701.0 543.3h7v7h-7zM701.9 547.0h7v7h-7zM699.2 552.9h7v7h-7z"/>
<path fill="#4479f2" d="M668.2 551.5h7v7h-7zM717.4 562.5h7v7h-7zM676.1 558.4h7v7h-7zM671.5 563.2h7v7h-7zM671.5 574.3h7v7h-7zM675.5 579.2h7v7h-7zM691.5 580.5h7v7h-7zM743.1 584.9h7v7h-7zM712.1 474.5h7v7h-7zM723.5 465.5h7v7h-7zM798.1 466.7h7v7h-7zM803.5 474.3h7v7h-7zM795.5 480.9h7v7h-7zM705.5 487.0h7v7h-7zM732.7 486.7h7v7h-7zM735.9 487.8h7v7h-7zM743.5 493.9h7v7h-7zM740.3 500.5h7v7h-7zM754.9 488.9h7v7h-7zM783.9 486.7h7v7h-7zM787.6 495.5h7v7h-7zM776.3 503.5h7v7h-7zM754.5 493.3h7v7h-7zM764.3 480.6h7v7h-7zM803.1 504.2h7v7h-7zM785.5 512.5h7v7h-7zM783.3 535.2h7v7h-7zM804.6 546.1h7v7h-7zM795.3 532.5h7v7h-7zM797.7 514.7h7v7h-7zM816.6 473.7h7v7h-7zM824.3 466.7h7v7h-7zM873.3 466.7h7v7h-7zM876.6 473.7h7v7h-7zM883.2 479.1h7v7h-7zM1007.7 480.2h7v7h-7zM826.5 481.3h7v7h-7zM861.4 481.3h7v7h-7zM889.7 467.8h7v7h-7zM893.6 466.0h7v7h-7z"/>
<path fill="#4479f2" d="M1004.5 467.1h7v7h-7zM826.9 486.7h7v7h-7zM851.5 487.4h7v7h-7zM855.9 481.7h7v7h-7zM825.4 495.0h7v7h-7zM831.9 500.9h7v7h-7zM844.6 497.0h7v7h-7zM859.2 500.9h7v7h-7zM871.2 490.5h7v7h-7zM876.6 487.8h7v7h-7zM931.4 488.9h7v7h-7zM935.8 490.0h7v7h-7zM952.8 504.5h7v7h-7zM954.5 507.0h7v7h-7zM860.3 505.3h7v7h-7zM717.4 543.5h7v7h-7zM765.4 546.7h7v7h-7zM769.7 548.5h7v7h-7zM763.2 554.4h7v7h-7zM757.8 559.4h7v7h-7zM725.0 555.5h7v7h-7zM718.5 546.7h7v7h-7zM728.3 559.8h7v7h-7zM727.2 565.3h7v7h-7zM762.1 565.3h7v7h-7zM765.8 567.5h7v7h-7zM756.0 579.5h7v7h-7zM771.5 583.8h7v7h-7zM793.1 569.6h7v7h-7zM801.6 567.5h7v7h-7zM814.0 568.1h7v7h-7zM817.7 571.8h7v7h-7zM822.1 587.1h7v7h-7zM818.8 591.5h7v7h-7zM770.8 587.7h7v7h-7zM829.7 558.5h7v7h-7zM837.4 548.9h7v7h-7zM847.2 550.7h7v7h-7zM862.5 556.5h7v7h-7zM860.9 564.8h7v7h-7z"/>
<path fill="#4479f2" d="M829.7 562.5h7v7h-7zM885.3 552.5h7v7h-7zM925.3 555.9h7v7h-7zM966.3 558.7h7v7h-7zM973.3 560.2h7v7h-7zM966.3 570.3h7v7h-7zM961.9 571.8h7v7h-7zM928.8 570.3h7v7h-7zM895.2 567.5h7v7h-7zM890.8 565.3h7v7h-7zM885.3 556.5h7v7h-7zM846.1 570.7h7v7h-7zM875.1 572.9h7v7h-7zM955.4 578.8h7v7h-7zM841.7 574.0h7v7h-7zM841.7 586.0h7v7h-7zM847.6 593.2h7v7h-7zM953.2 601.7h7v7h-7zM959.7 598.5h7v7h-7zM973.3 580.5h7v7h-7zM1011.0 470.5h7v7h-7zM1012.1 473.7h7v7h-7zM966.3 489.4h7v7h-7zM976.5 488.9h7v7h-7zM1000.1 489.5h7v7h-7zM1003.4 493.3h7v7h-7zM1003.4 497.7h7v7h-7zM994.5 504.8h7v7h-7zM989.5 504.8h7v7h-7zM968.0 493.3h7v7h-7zM1018.6 505.7h7v7h-7zM1000.8 515.1h7v7h-7zM995.7 545.0h7v7h-7zM1015.4 561.5h7v7h-7zM1007.7 542.8h7v7h-7zM1012.5 519.5h7v7h-7zM1028.5 480.9h7v7h-7zM1024.1 476.9h7v7h-7zM1023.0 471.5h7v7h-7zM1027.4 467.8h7v7h-7z"/>
<path fill="#4479f2" d="M1076.4 468.6h7v7h-7zM1077.1 473.7h7v7h-7zM1064.9 480.6h7v7h-7zM1084.5 480.2h7v7h-7zM1030.6 490.0h7v7h-7zM1053.5 490.0h7v7h-7zM1055.7 493.9h7v7h-7zM1054.0 498.7h7v7h-7zM1045.9 505.3h7v7h-7zM1039.4 505.7h7v7h-7zM1030.6 499.8h7v7h-7zM1028.5 494.4h7v7h-7zM1064.4 507.0h7v7h-7zM1077.1 492.9h7v7h-7zM1081.9 490.5h7v7h-7zM1199.8 492.5h7v7h-7zM1209.1 497.1h7v7h-7zM1223.5 511.5h7v7h-7zM1226.0 514.5h7v7h-7zM1065.0 510.5h7v7h-7zM1224.2 492.0h7v7h-7zM1223.5 495.5h7v7h-7zM1259.7 511.4h7v7h-7zM978.9 599.5h7v7h-7zM1000.5 583.8h7v7h-7zM1008.4 581.6h7v7h-7zM1021.9 583.1h7v7h-7zM1027.4 587.1h7v7h-7zM1031.1 603.5h7v7h-7zM977.2 603.0h7v7h-7zM1034.3 574.0h7v7h-7zM1041.5 562.6h7v7h-7zM1049.8 564.6h7v7h-7zM1077.5 571.8h7v7h-7zM1081.5 565.9h7v7h-7zM1155.3 570.5h7v7h-7zM1209.1 573.8h7v7h-7zM1232.5 573.8h7v7h-7zM1235.0 577.5h7v7h-7zM1229.5 585.1h7v7h-7z"/>
<path fill="#4479f2" d="M1223.7 588.9h7v7h-7zM1189.0 585.9h7v7h-7zM1163.3 585.1h7v7h-7zM1111.2 581.9h7v7h-7zM1094.1 580.1h7v7h-7zM1088.5 576.6h7v7h-7zM1081.5 569.5h7v7h-7zM1034.3 578.0h7v7h-7zM1072.1 579.9h7v7h-7zM1046.5 605.5h7v7h-7zM1046.5 588.6h7v7h-7zM1244.3 599.0h7v7h-7zM1227.5 621.6h7v7h-7zM1222.5 624.9h7v7h-7zM1031.1 608.0h7v7h-7zM1259.7 576.3h7v7h-7zM1251.9 583.9h7v7h-7zM1251.9 592.7h7v7h-7zM1243.8 622.5h7v7h-7zM1245.5 626.0h7v7h-7zM468.5 559.9h7v7h-7zM498.1 544.2h7v7h-7zM511.0 545.5h7v7h-7zM513.2 547.9h7v7h-7zM518.4 563.5h7v7h-7zM514.7 567.3h7v7h-7zM483.3 563.9h7v7h-7zM469.5 563.5h7v7h-7zM73.5 838.5h7v7h-7zM608.0 108.5h7v7h-7zM678.0 165.5h7v7h-7zM889.5 95.5h7v7h-7zM591.5 144.5h7v7h-7zM537.5 237.5h7v7h-7zM500.5 299.5h7v7h-7zM613.0 301.0h7v7h-7zM490.5 319.0h7v7h-7zM1031.7 265.0h7v7h-7zM771.0 411.5h7v7h-7zM501.5 459.5h7v7h-7z"/>
<path fill="#4479f2" d="M484.8 477.5h7v7h-7zM483.3 486.5h7v7h-7zM518.4 469.8h7v7h-7zM522.1 507.3h7v7h-7zM536.5 464.5h7v7h-7zM542.3 465.2h7v7h-7zM586.5 464.9h7v7h-7zM611.1 464.9h7v7h-7zM520.2 470.4h7v7h-7zM609.3 478.3h7v7h-7zM627.2 501.2h7v7h-7zM677.9 465.2h7v7h-7zM679.8 479.2h7v7h-7zM555.8 550.3h7v7h-7zM580.5 571.5h7v7h-7zM517.5 563.5h7v7h-7zM770.4 466.0h7v7h-7zM781.3 466.0h7v7h-7zM848.9 466.5h7v7h-7zM751.6 546.1h7v7h-7zM737.5 565.7h7v7h-7zM842.5 580.0h7v7h-7zM970.5 578.5h7v7h-7zM975.5 582.5h7v7h-7zM937.9 467.1h7v7h-7zM964.5 467.1h7v7h-7zM951.0 503.5h7v7h-7zM954.5 507.5h7v7h-7zM1045.5 467.8h7v7h-7zM1047.6 480.6h7v7h-7zM1128.5 492.0h7v7h-7zM1118.0 468.1h7v7h-7zM1185.5 468.5h7v7h-7zM1262.5 469.0h7v7h-7zM1262.5 492.5h7v7h-7zM1262.5 556.9h7v7h-7zM1222.5 491.8h7v7h-7zM1226.0 494.5h7v7h-7zM1079.5 563.0h7v7h-7zM1083.5 567.5h7v7h-7z"/>
<path fill="#4479f2" d="M1028.0 607.8h7v7h-7zM1046.9 607.8h7v7h-7zM1241.5 596.5h7v7h-7zM1246.5 601.5h7v7h-7zM1241.5 623.5h7v7h-7zM1246.5 625.0h7v7h-7z"/>
</svg>
</div>
<div class="abs" id="vscroll"></div>
<div class="abs" id="status"></div>
<div class="abs" id="rgap"></div>
<div class="abs" id="rhead"></div>
<div class="abs" id="strip"></div>
<div class="abs" id="panel"></div>
<div class="abs" id="botline" style="left:0;top:893px;width:1588px;height:1px;background:#2e2e2e"></div>
<div id="ui" style="position:absolute;left:0;top:0;width:1588px;height:894px;will-change:transform">
<!-- MENU BAR -->
<div class="abs" style="left:10px;top:6px;width:18px;height:17px;background:#2e1603;border:1.5px solid #e8912d;border-radius:2px"></div>
<div class="t" style="left:13px;top:9px;font-size:11px;font-weight:bold;color:#f29a30;letter-spacing:-0.3px">Ai</div>
<svg style="left:41px;top:7px" width="20" height="17" viewBox="0 0 20 17"><path d="M10 0 L20 9.2 L17.2 9.2 L17.2 16.5 L11.8 16.5 L11.8 11 L8.2 11 L8.2 16.5 L2.8 16.5 L2.8 9.2 L0 9.2 Z" fill="#d2d2d2"/></svg>
<div class="abs" style="left:75px;top:5px;width:1px;height:20px;background:#626262"></div>
<div class="abs" style="left:86px;top:7px;width:32px;height:17px;background:#464646;border-radius:2px"></div>
<div class="t menu" style="left:92px">File</div>
<div class="t menu" style="left:126px">Edit</div>
<div class="t menu" style="left:162px">Object</div>
<div class="t menu" style="left:214px">Type</div>
<div class="t menu" style="left:255px">Select</div>
<div class="t menu" style="left:303px">Effect</div>
<div class="t menu" style="left:349px">View</div>
<div class="t menu" style="left:389px">Window</div>
<div class="t menu" style="left:449px">Help</div>
<!--UL-->
<div class="abs" style="left:92.0px;top:21px;width:8.0px;height:1px;background:#e0e0e0"></div>
<div class="abs" style="left:126.0px;top:21px;width:8.7px;height:1px;background:#e0e0e0"></div>
<div class="abs" style="left:162.0px;top:21px;width:10.1px;height:1px;background:#e0e0e0"></div>
<div class="abs" style="left:214.0px;top:21px;width:7.2px;height:1px;background:#e0e0e0"></div>
<div class="abs" style="left:255.0px;top:21px;width:8.7px;height:1px;background:#e0e0e0"></div>
<div class="abs" style="left:325.9px;top:21px;width:6.5px;height:1px;background:#e0e0e0"></div>
<div class="abs" style="left:349.0px;top:21px;width:8.4px;height:1px;background:#e0e0e0"></div>
<div class="abs" style="left:389.0px;top:21px;width:12.3px;height:1px;background:#e0e0e0"></div>
<div class="abs" style="left:449.0px;top:21px;width:9.4px;height:1px;background:#e0e0e0"></div>
<!--/UL-->
<div class="abs" style="left:487px;top:5px;width:1px;height:20px;background:#626262"></div>
<svg style="left:501px;top:8px" width="18" height="12" viewBox="0 0 18 12"><rect x="0" y="0" width="8" height="11.5" fill="#cfcfcf"/><rect x="9.5" y="0" width="8" height="5" fill="#cfcfcf"/><rect x="9.5" y="6.5" width="8" height="5" fill="#cfcfcf"/></svg>
<svg style="left:526px;top:11px" width="10" height="6" viewBox="0 0 10 6"><path d="M1 1 L5 5 L9 1" fill="none" stroke="#dedede" stroke-width="1.4"/></svg>
<svg style="left:553px;top:7px" width="20" height="16" viewBox="0 0 20 16"><path d="M5 14.5 H1 V1 H19 V14.5 H16" fill="none" stroke="#cfcfcf" stroke-width="1.5"/><path d="M8.2 3.5 q1.2 -0.8 1.8 0.5 l0.6 4 l4 1 q1.3 0.6 1 2 l-0.8 4.5 h-5.5 l-3 -4.5 q-0.4 -1.2 1 -1.2 l1.2 1 z" fill="#cfcfcf"/></svg>
<!-- right side -->
<svg style="left:1139px;top:6px" width="13" height="18" viewBox="0 0 14 19"><path d="M7 1 a5 5 0 0 1 3 9 v3 h-6 v-3 a5 5 0 0 1 3 -9 z" fill="none" stroke="#d6d6d6" stroke-width="1.3"/><path d="M4.5 15 h5 M5.5 17 h3" stroke="#d6d6d6" stroke-width="1.2"/></svg>
<div class="abs" style="left:1166px;top:5px;width:1px;height:20px;background:#626262"></div>
<div class="t" style="left:1180px;top:8px;font-size:12px;color:#e0e0e0;letter-spacing:-0.26px">Essentials Classic</div>
<svg style="left:1281px;top:12px" width="10" height="6" viewBox="0 0 10 6"><path d="M1 1 L5 5 L9 1" fill="none" stroke="#dedede" stroke-width="1.4"/></svg>
<div class="abs" style="left:1305px;top:5px;width:1px;height:20px;background:#626262"></div>
<div class="abs" style="left:1315px;top:4px;width:175px;height:21px;background:#454545;border:1px solid #5c5c5c;border-radius:3px"></div>
<svg style="left:1320px;top:8px" width="18" height="13" viewBox="0 0 18 13"><circle cx="6.5" cy="5" r="4" fill="none" stroke="#d2d2d2" stroke-width="1.5"/><path d="M3.8 8 L0.8 11.6" stroke="#d2d2d2" stroke-width="1.7"/><path d="M12.5 5 l2.2 2.2 l2.2 -2.2" fill="none" stroke="#d2d2d2" stroke-width="1.1"/></svg>
<div class="t" style="left:1340px;top:9px;font-size:11.5px;color:#8c8c8c;letter-spacing:-0.1px">Search Adobe Stock</div>
<div class="abs" style="left:1498px;top:-2px;width:87px;height:21px;background:#575757;border:1px solid #636363;border-radius:0 0 4px 4px"></div>
<div class="abs" style="left:1527px;top:0;width:1px;height:18px;background:#636363"></div>
<div class="abs" style="left:1555px;top:0;width:1px;height:18px;background:#636363"></div>
<div class="abs" style="left:1508px;top:10.500px;width:10px;height:3px;background:#cdcdcd"></div>
<svg style="left:1535px;top:4px" width="14" height="12" viewBox="0 0 14 12"><path d="M6.500 4 V1.200 H12.200 V7.800 H9.500" fill="none" stroke="#cdcdcd" stroke-width="1.600"/><rect x="1.600" y="4.900" width="7" height="5.600" fill="none" stroke="#cdcdcd" stroke-width="1.600"/></svg>
<svg style="left:1564px;top:5px" width="12" height="10" viewBox="0 0 12 10"><path d="M1 0.500 L11 9.500 M11 0.500 L1 9.500" stroke="#d2d2d2" stroke-width="1.500"/></svg>

<!-- CONTROL BAR -->
<div class="abs" style="left:5px;top:38px;width:3px;height:21px;background:repeating-linear-gradient(to bottom,#434343 0,#434343 1px,#535353 1px,#535353 2px)"></div>
<div class="t lbl" style="left:16px;top:43.5px;font-size:11.5px;transform:scaleX(0.845);transform-origin:0 0;">Path</div>
<div class="abs" style="left:89px;top:35px;width:1px;height:28px;background:#4a4a4a"></div>
<svg style="left:98px;top:39px" width="20" height="20" viewBox="0 0 20 20"><rect width="20" height="20" fill="#fff"/><path d="M2.5 17.5 L17.5 2.5" stroke="#e0161a" stroke-width="1.8"/></svg>
<div class="abs" style="left:118px;top:39px;width:19px;height:20px;background:#4b4b4b;border:1px solid #5a5a5a;border-radius:0px;"></div>
<svg style="left:122px;top:46px" width="10" height="6" viewBox="0 0 10 6"><path d="M1 1 L5.0 5 L9 1" fill="none" stroke="#dedede" stroke-width="1.4"/></svg>
<svg style="left:144px;top:39px" width="20" height="20" viewBox="0 0 20 20"><rect x="0.5" y="0.5" width="19" height="19" fill="#000" stroke="#d8d8d8"/><rect x="6.5" y="6.5" width="7" height="7" fill="#bdbdbd" stroke="#f2f2f2"/></svg>
<div class="abs" style="left:164px;top:39px;width:19px;height:20px;background:#535353;border:1px solid #5a5a5a;border-radius:0px;"></div>
<svg style="left:168px;top:46px" width="10" height="6" viewBox="0 0 10 6"><path d="M1 1 L5.0 5 L9 1" fill="none" stroke="#dedede" stroke-width="1.4"/></svg>
<div class="t" style="left:195px;top:43.5px;font-size:11.5px;color:#d8d8d8;transform:scaleX(0.907);transform-origin:0 0"><span class="dot">Stroke:</span></div>
<div class="abs" style="left:234px;top:39px;width:19px;height:20px;background:#4b4b4b;border:1px solid #5e5e5e;border-radius:2px;"></div>
<svg style="left:238px;top:41px" width="11" height="16" viewBox="0 0 11 16"><path d="M1.5 5.5 L5.5 1.8 L9.5 5.5 M1.5 10.5 L5.5 14.2 L9.5 10.5" fill="none" stroke="#dedede" stroke-width="1.3"/></svg>
<div class="abs" style="left:252px;top:39px;width:46px;height:20px;background:#454545;border:1px solid #5e5e5e;border-radius:2px;"></div>
<div class="t" style="left:255px;top:43px;font-size:11.5px;color:#e6e6e6;transform:scaleX(1.0);transform-origin:0 0">0.5 pt</div>
<div class="abs" style="left:298px;top:39px;width:20px;height:20px;background:#4b4b4b;border:1px solid #5e5e5e;border-radius:2px;"></div>
<svg style="left:303px;top:46px" width="10" height="6" viewBox="0 0 10 6"><path d="M1 1 L5.0 5 L9 1" fill="none" stroke="#dedede" stroke-width="1.4"/></svg>
<div class="abs" style="left:324px;top:39px;width:93px;height:20px;background:#d9d9d9"></div>
<div class="abs" style="left:331px;top:47.5px;width:41px;height:2.6px;background:#111"></div>
<div class="t" style="left:376px;top:45px;font-size:11.5px;color:#1a1a1a;transform:scaleX(0.868);transform-origin:0 0">Uniform</div>
<div class="abs" style="left:417px;top:39px;width:19px;height:20px;background:#4b4b4b;border:1px solid #5e5e5e;border-radius:2px;"></div>
<svg style="left:422px;top:46px" width="10" height="6" viewBox="0 0 10 6"><path d="M1 1 L5.0 5 L9 1" fill="none" stroke="#dedede" stroke-width="1.4"/></svg>
<div class="abs" style="left:442px;top:39px;width:90px;height:20px;background:#d9d9d9"></div>
<div class="abs" style="left:448px;top:47px;width:50px;height:2.6px;background:#111"></div>
<div class="t" style="left:503px;top:43.5px;font-size:11.5px;color:#1a1a1a;transform:scaleX(0.854);transform-origin:0 0">Basic</div>
<div class="abs" style="left:532px;top:39px;width:19px;height:20px;background:#4b4b4b;border:1px solid #5e5e5e;border-radius:2px;"></div>
<svg style="left:537px;top:46px" width="10" height="6" viewBox="0 0 10 6"><path d="M1 1 L5.0 5 L9 1" fill="none" stroke="#dedede" stroke-width="1.4"/></svg>
<div class="t" style="left:558px;top:43.5px;font-size:11.5px;color:#d8d8d8;transform:scaleX(0.9);transform-origin:0 0"><span class="dot">Opacity:</span></div>
<div class="abs" style="left:602px;top:39px;width:54px;height:20px;background:#454545;border:1px solid #5e5e5e;border-radius:2px;"></div>
<div class="t" style="left:605px;top:43px;font-size:11.5px;color:#e6e6e6;transform:scaleX(0.918);transform-origin:0 0">100%</div>
<div class="abs" style="left:656px;top:39px;width:17px;height:20px;background:#4b4b4b;border:1px solid #5e5e5e;border-radius:2px;"></div>
<svg style="left:661px;top:44px" width="6" height="10" viewBox="0 0 6 10"><path d="M1 1 L5 5 L1 9" fill="none" stroke="#dedede" stroke-width="1.4"/></svg>
<div class="t" style="left:679px;top:43.5px;font-size:11.5px;color:#c9c9c9;transform:scaleX(0.9);transform-origin:0 0">Style:</div>
<div class="abs" style="left:711px;top:39px;width:20px;height:20px;background:#dcdcdc"></div>
<div class="abs" style="left:731px;top:39px;width:19px;height:20px;background:#535353;border:1px solid #5a5a5a;border-radius:0px;"></div>
<svg style="left:736px;top:46px" width="10" height="6" viewBox="0 0 10 6"><path d="M1 1 L5.0 5 L9 1" fill="none" stroke="#dedede" stroke-width="1.4"/></svg>
<div class="abs" style="left:757px;top:35px;width:1px;height:28px;background:#4a4a4a"></div>
<svg style="left:768px;top:40px" width="17" height="17" viewBox="0 0 17 17"><circle cx="8.5" cy="8.5" r="8" fill="#cdcdcd"/><circle cx="8.5" cy="8.5" r="5.6" fill="#8a8a8a"/><path d="M8.5 8.5 L8.5 2.9 A5.6 5.6 0 0 1 13.3 5.7 Z" fill="#e8e8e8"/><path d="M8.5 8.5 L13.3 11.3 A5.6 5.6 0 0 1 8.5 14.1 Z" fill="#5c5c5c"/><path d="M8.5 8.5 L3.7 11.3 A5.6 5.6 0 0 1 3.7 5.7 Z" fill="#444"/><circle cx="8.5" cy="8.5" r="1.6" fill="#d0d0d0"/></svg>
<div class="abs" style="left:796px;top:35px;width:1px;height:28px;background:#4a4a4a"></div>
<div class="t" style="left:804px;top:43.5px;font-size:11.5px;color:#d8d8d8;transform:scaleX(0.884);transform-origin:0 0"><span class="dot">Corners:</span></div>
<div class="abs" style="left:850px;top:39px;width:18px;height:20px;background:#4b4b4b;border:1px solid #5e5e5e;border-radius:2px;"></div>
<svg style="left:853px;top:41px" width="11" height="16" viewBox="0 0 11 16"><path d="M1.5 5.5 L5.5 1.8 L9.5 5.5 M1.5 10.5 L5.5 14.2 L9.5 10.5" fill="none" stroke="#dedede" stroke-width="1.3"/></svg>
<div class="abs" style="left:868px;top:39px;width:53px;height:20px;background:#454545;border:1px solid #5e5e5e;border-radius:2px;"></div>
<div class="abs" style="left:928px;top:35px;width:1px;height:28px;background:#4a4a4a"></div>
<svg style="left:941px;top:41px" width="26" height="16" viewBox="0 0 26 16"><rect x="1" y="1" width="13" height="13" fill="none" stroke="#c8c8c8" stroke-width="1.2" stroke-dasharray="1.6 1.6"/><rect x="6.5" y="6.5" width="2" height="2" fill="#c8c8c8"/><path d="M17.5 6.5 L21 10 L24.5 6.5" fill="none" stroke="#c8c8c8" stroke-width="1.1"/></svg>
<div class="abs" style="left:974px;top:35px;width:1px;height:28px;background:#4a4a4a"></div>
<svg style="left:981px;top:39px" width="18" height="19" viewBox="0 0 18 19"><rect x="0" y="0" width="1.3" height="19" fill="#cfcfcf"/><rect x="3" y="2.5" width="8" height="5.5" fill="#cfcfcf"/><rect x="3" y="10.5" width="14" height="5.5" fill="#cfcfcf"/></svg>
<svg style="left:1009px;top:39px" width="16" height="19" viewBox="0 0 16 19"><rect x="7.3" y="0" width="1.3" height="19" fill="#cfcfcf"/><rect x="4" y="2.5" width="8" height="5.5" fill="#cfcfcf"/><rect x="1" y="10.5" width="14" height="5.5" fill="#cfcfcf"/></svg>
<svg style="left:1036px;top:39px" width="18" height="19" viewBox="0 0 18 19"><rect x="16.2" y="0" width="1.3" height="19" fill="#cfcfcf"/><rect x="6.5" y="2.5" width="8" height="5.5" fill="#cfcfcf"/><rect x="0.5" y="10.5" width="14" height="5.5" fill="#cfcfcf"/></svg>
<svg style="left:1067px;top:40px" width="19" height="17" viewBox="0 0 19 17"><rect x="0" y="0" width="19" height="1.3" fill="#cfcfcf"/><rect x="3" y="3" width="5.5" height="13" fill="#cfcfcf"/><rect x="11" y="3" width="5.5" height="8" fill="#cfcfcf"/></svg>
<svg style="left:1094px;top:41px" width="19" height="15" viewBox="0 0 19 15"><rect x="0" y="6.8" width="19" height="1.3" fill="#cfcfcf"/><rect x="3" y="0.5" width="5.5" height="14" fill="#cfcfcf"/><rect x="11" y="3.5" width="5.5" height="8" fill="#cfcfcf"/></svg>
<svg style="left:1121px;top:40px" width="19" height="17" viewBox="0 0 19 17"><rect x="0" y="15.7" width="19" height="1.3" fill="#cfcfcf"/><rect x="3" y="1" width="5.5" height="13" fill="#cfcfcf"/><rect x="11" y="6" width="5.5" height="8" fill="#cfcfcf"/></svg>
<svg style="left:1153px;top:40px" width="19" height="17" viewBox="0 0 19 17"><rect x="0" y="0" width="19" height="1.2" fill="#cfcfcf"/><rect x="5" y="2" width="9" height="4" fill="#cfcfcf"/><rect x="0" y="9" width="19" height="1.2" fill="#cfcfcf"/><rect x="3" y="11" width="13" height="5" fill="#cfcfcf"/></svg>
<svg style="left:1179px;top:40px" width="19" height="17" viewBox="0 0 19 17"><rect x="0" y="3.4" width="19" height="1.2" fill="#cfcfcf"/><rect x="5" y="1.5" width="9" height="5" fill="#cfcfcf"/><rect x="0" y="12.4" width="19" height="1.2" fill="#cfcfcf"/><rect x="3" y="10.5" width="13" height="5" fill="#cfcfcf"/></svg>
<svg style="left:1206px;top:40px" width="19" height="17" viewBox="0 0 19 17"><rect x="0" y="6.3" width="19" height="1.2" fill="#cfcfcf"/><rect x="5" y="1" width="9" height="5" fill="#cfcfcf"/><rect x="0" y="15.8" width="19" height="1.2" fill="#cfcfcf"/><rect x="3" y="10.5" width="13" height="5" fill="#cfcfcf"/></svg>
<svg style="left:1240px;top:39px" width="18" height="19" viewBox="0 0 18 19"><rect x="0" y="0" width="1.2" height="19" fill="#cfcfcf"/><rect x="2.2" y="3" width="5" height="13" fill="#cfcfcf"/><rect x="9.5" y="0" width="1.2" height="19" fill="#cfcfcf"/><rect x="11.7" y="5" width="4" height="9" fill="#cfcfcf"/></svg>
<svg style="left:1267px;top:39px" width="17" height="19" viewBox="0 0 17 19"><rect x="3" y="0" width="1.2" height="19" fill="#cfcfcf"/><rect x="1" y="3" width="5" height="13" fill="#cfcfcf"/><rect x="12" y="0" width="1.2" height="19" fill="#cfcfcf"/><rect x="10.5" y="5" width="4" height="9" fill="#cfcfcf"/></svg>
<svg style="left:1293px;top:39px" width="18" height="19" viewBox="0 0 18 19"><rect x="6.5" y="0" width="1.2" height="19" fill="#cfcfcf"/><rect x="0.5" y="3" width="5" height="13" fill="#cfcfcf"/><rect x="16" y="0" width="1.2" height="19" fill="#cfcfcf"/><rect x="11" y="5" width="4" height="9" fill="#cfcfcf"/></svg>
<div class="abs" style="left:1321px;top:35px;width:1px;height:28px;background:#4a4a4a"></div>
<div class="t" style="left:1330px;top:43.5px;font-size:11.5px;color:#e6e6e6;transform:scaleX(0.866);transform-origin:0 0"><span class="dot">Transform</span></div>
<svg style="left:1386px;top:39px" width="19" height="19" viewBox="0 0 19 19"><path d="M2 5 h5 M2 12 h4 M2 5 v7 M9 5 v1.5" fill="none" stroke="#cfcfcf" stroke-width="1.1"/><rect x="0.5" y="3.5" width="3" height="3" fill="#535353" stroke="#cfcfcf" stroke-width="0.9"/><rect x="0.5" y="10.500" width="3" height="3" fill="#535353" stroke="#cfcfcf" stroke-width="0.9"/><rect x="12" y="1" width="5" height="5" fill="none" stroke="#cfcfcf" stroke-width="1.1"/><path d="M7.5 6 L7.5 17.5 L10.5 14.6 L12.6 18.5 L14.2 17.6 L12.2 13.8 L16 13.5 Z" fill="#cfcfcf"/></svg>
<svg style="left:1409px;top:46px" width="10" height="6" viewBox="0 0 10 6"><path d="M1 1 L5.0 5 L9 1" fill="none" stroke="#dedede" stroke-width="1.4"/></svg>
<svg style="left:1480px;top:40px" width="16" height="16" viewBox="0 0 16 16"><rect x="0" y="0" width="6" height="6" fill="#cfcfcf"/><rect x="9" y="0" width="6" height="6" fill="#cfcfcf"/><rect x="0" y="9" width="6" height="6" fill="#cfcfcf"/><rect x="9" y="9" width="6" height="6" fill="#cfcfcf"/><path d="M7.5 0 v15 M0 7.500 h15" stroke="#cfcfcf" stroke-width="0.9"/></svg>
<svg style="left:1507px;top:40px" width="17" height="16" viewBox="0 0 17 16"><rect x="0" y="0" width="4" height="4" fill="#cfcfcf"/><rect x="0" y="5.8" width="4" height="4" fill="#cfcfcf"/><rect x="0" y="11.600" width="4" height="4" fill="#cfcfcf"/><path d="M6.500 3.500 H11.500 A3.500 3.500 0 0 1 11.500 10.500 H9.500" fill="none" stroke="#cfcfcf" stroke-width="2.2"/></svg>
<svg style="left:1530px;top:46px" width="10" height="6" viewBox="0 0 10 6"><path d="M1 1 L5.0 5 L9 1" fill="none" stroke="#6e6e6e" stroke-width="1.2"/></svg>
<svg style="left:1558px;top:42px" width="13" height="12" viewBox="0 0 13 12"><rect x="0" y="0.5" width="2" height="2" fill="#cfcfcf"/><rect x="0" y="5" width="2" height="2" fill="#cfcfcf"/><rect x="0" y="9.500" width="2" height="2" fill="#cfcfcf"/><rect x="3.500" y="0.700" width="9" height="1.700" fill="#cfcfcf"/><rect x="3.500" y="5.200" width="9" height="1.700" fill="#cfcfcf"/><rect x="3.500" y="9.700" width="9" height="1.700" fill="#cfcfcf"/></svg>

<!-- DOCUMENT TABS -->
<div class="tab" style="left:77px;width:312px"><span style="left:11px">moose start for brendon.ai @ 16.67% (RGB/Previ...</span></div>
<div class="tab" style="left:389px;width:312px"><span style="left:10px">elements file [Recovered].ai @ 6.25% (RGB/Previe...</span></div>
<div class="tab" style="left:701px;width:303px"><span style="left:10px">elements recovered.ai* @ 16.67% (CMYK/Previe...</span></div>
<div class="tab" style="left:1004px;width:239px;background:#505050;color:#f4f4f4;border-right:1px solid #383838"><span style="left:9px;letter-spacing:0.09px">alabama* @ 66.67% (CMYK/Preview)</span></div>
<svg style="left:374px;top:78px" width="8" height="8" viewBox="0 0 8 8"><path d="M0.800 0.800 L7.200 7.200 M7.200 0.800 L0.800 7.200" stroke="#b0b0b0" stroke-width="1.100"/></svg>
<svg style="left:685px;top:78px" width="8" height="8" viewBox="0 0 8 8"><path d="M0.800 0.800 L7.200 7.200 M7.200 0.800 L0.800 7.200" stroke="#b0b0b0" stroke-width="1.100"/></svg>
<svg style="left:988px;top:78px" width="8" height="8" viewBox="0 0 8 8"><path d="M0.800 0.800 L7.200 7.200 M7.200 0.800 L0.800 7.200" stroke="#b0b0b0" stroke-width="1.100"/></svg>
<svg style="left:1228px;top:78px" width="8" height="8" viewBox="0 0 8 8"><path d="M0.800 0.800 L7.200 7.200 M7.200 0.800 L0.800 7.200" stroke="#e0e0e0" stroke-width="1.100"/></svg>

<!-- TOOLBAR -->
<svg style="left:6px;top:68.500px" width="10" height="7.500" viewBox="0 0 12 9"><path d="M5 0.800 L1.500 4.500 L5 8.200 M10.500 0.800 L7 4.500 L10.500 8.200" fill="none" stroke="#cfcfcf" stroke-width="1.100"/></svg>
<div class="abs" style="left:26px;top:83px;width:20px;height:4px;background:repeating-linear-gradient(to right,#424242 0,#424242 1px,#535353 1px,#535353 2px)"></div>
<div class="abs" style="left:38px;top:100px;width:29px;height:22px;background:#2d2d2d;border-radius:3px"></div>
<svg style="left:14px;top:102px" width="16" height="18" viewBox="0 0 16 18"><path d="M2 1.5 L2 16.5 L5.800 13 L14 12.500 Z" fill="none" stroke="#cfcfcf" stroke-width="1.4" stroke-linejoin="round"/></svg>
<svg style="left:46px;top:102px" width="16" height="18" viewBox="0 0 16 18"><path d="M1.5 0.5 L1.5 17.500 L6 13.500 L15 12.500 Z" fill="#d6d6d6"/></svg>
<svg style="left:62px;top:117px" width="4" height="4" viewBox="0 0 4 4"><path d="M4 0 V4 H0 Z" fill="#cfcfcf"/></svg>
<svg style="left:13px;top:128px" width="18" height="18" viewBox="0 0 18 18"><path d="M1.5 16.5 L10.5 7.500" stroke="#cfcfcf" stroke-width="2.2"/><path d="M6 2 v4 M4 4 h4 M13 1 v4 M11 3 h4 M14.500 8 v3 M13 9.500 h3" stroke="#cfcfcf" stroke-width="1"/></svg>
<svg style="left:44px;top:128px" width="19" height="18" viewBox="0 0 19 18"><path d="M7 10.500 C1 9,0.500 3,6 1.500 C11 0,17 2,16.500 6" fill="none" stroke="#cfcfcf" stroke-width="1.4"/><circle cx="5" cy="10.500" r="1.800" fill="none" stroke="#cfcfcf" stroke-width="1.100"/><path d="M5 12.500 q1.500 2 -0.500 4" fill="none" stroke="#cfcfcf" stroke-width="1.100"/><path d="M9.500 5.500 L9.500 17 L12.300 14 L18 13.500 Z" fill="#cfcfcf"/></svg>
<svg style="left:11px;top:152px" width="22" height="18" viewBox="0 0 22 18"><path d="M0.500 4.500 h7" stroke="#cfcfcf" stroke-width="1.600"/><path d="M6.500 16.500 L9 8.500 L14 5.500 L18 9.500 L14.500 14.500 Z" fill="none" stroke="#cfcfcf" stroke-width="1.400" stroke-linejoin="round"/><path d="M6.500 16.500 L12 11" stroke="#cfcfcf" stroke-width="1.100"/><circle cx="12.300" cy="10.700" r="1.200" fill="#cfcfcf"/><path d="M14.500 4.500 L17 2 L21.500 6.500 L19 9" fill="#cfcfcf" stroke="#cfcfcf" stroke-width="1"/></svg>
<svg style="left:42px;top:152px" width="22" height="18" viewBox="0 0 22 18"><path d="M1.500 16 C1 11,5 11,4.500 7.500 C4 4.500,5.500 3,7 2.500" fill="none" stroke="#cfcfcf" stroke-width="1.300"/><path d="M7.500 16.500 L10 8.500 L15 5.500 L19 9.500 L15.500 14.500 Z" fill="none" stroke="#cfcfcf" stroke-width="1.400" stroke-linejoin="round"/><path d="M7.500 16.500 L13 11" stroke="#cfcfcf" stroke-width="1.100"/><circle cx="13.300" cy="10.700" r="1.200" fill="#cfcfcf"/><path d="M15.500 4.500 L18 2 L21.500 5.500 L19.500 8.500" fill="#cfcfcf" stroke="#cfcfcf" stroke-width="1"/></svg>
<svg style="left:31px;top:167px" width="4" height="4" viewBox="0 0 4 4"><path d="M4 0 V4 H0 Z" fill="#cfcfcf"/></svg>
<svg style="left:12px;top:178px" width="20" height="16" viewBox="0 0 20 16"><path d="M2.500 0.500 V13.500 M0.300 10.800 L2.500 14 L4.700 10.800" fill="none" stroke="#cfcfcf" stroke-width="1.300"/><path d="M7 1 H19.500 V4.500 H18.300 V2.600 H14.200 V13 H16 V14.500 H10.500 V13 H12.300 V2.600 H8.200 V4.500 H7 Z" fill="#cfcfcf"/></svg>
<svg style="left:45px;top:178px" width="16" height="16" viewBox="0 0 16 16"><path d="M1 15 L15 1" stroke="#cfcfcf" stroke-width="1.500"/></svg>
<svg style="left:31px;top:192px" width="4" height="4" viewBox="0 0 4 4"><path d="M4 0 V4 H0 Z" fill="#cfcfcf"/></svg>
<svg style="left:62px;top:192px" width="4" height="4" viewBox="0 0 4 4"><path d="M4 0 V4 H0 Z" fill="#cfcfcf"/></svg>
<svg style="left:13px;top:204px" width="18" height="15" viewBox="0 0 18 15"><rect x="0.700" y="0.700" width="16.600" height="13.600" fill="#7a7a7a" stroke="#cfcfcf" stroke-width="1.400"/></svg>
<svg style="left:44px;top:202px" width="18" height="18" viewBox="0 0 18 18"><path d="M16.500 0.500 Q18 1.500 17 3 L9.500 12.500 L7 10.500 Z" fill="#cfcfcf"/><path d="M6.200 11.200 L8.800 13.400 Q8.500 17 1 17.500 Q4 15 3.800 13 Q4.200 11.200 6.200 11.200 Z" fill="#cfcfcf"/></svg>
<svg style="left:31px;top:217px" width="4" height="4" viewBox="0 0 4 4"><path d="M4 0 V4 H0 Z" fill="#cfcfcf"/></svg>
<svg style="left:62px;top:217px" width="4" height="4" viewBox="0 0 4 4"><path d="M4 0 V4 H0 Z" fill="#cfcfcf"/></svg>
<svg style="left:12px;top:228px" width="21" height="17" viewBox="0 0 21 17"><circle cx="7" cy="8" r="5.800" fill="#7a7a7a" stroke="#cfcfcf" stroke-width="1.300"/><path d="M8.500 15 L10 16.500 L20.500 5.500 L18 3 L8 12.500 Z" fill="#cfcfcf" stroke="#535353" stroke-width="0.600"/></svg>
<svg style="left:44px;top:228px" width="18" height="17" viewBox="0 0 18 17"><path d="M1 10.500 L9.500 1 L17 6.500 L9 16 Z" fill="#cfcfcf"/><path d="M2.500 11.200 L7.800 15.300 L6.500 16.500 L1.200 12.500 Z" fill="#535353" stroke="#cfcfcf" stroke-width="0.900"/></svg>
<svg style="left:31px;top:242px" width="4" height="4" viewBox="0 0 4 4"><path d="M4 0 V4 H0 Z" fill="#cfcfcf"/></svg>
<svg style="left:62px;top:242px" width="4" height="4" viewBox="0 0 4 4"><path d="M4 0 V4 H0 Z" fill="#cfcfcf"/></svg>
<svg style="left:12px;top:252px" width="19" height="18" viewBox="0 0 19 18"><path d="M4 4.500 A7 7 0 0 1 16.500 10" fill="none" stroke="#cfcfcf" stroke-width="1.500"/><path d="M0.500 5.500 L6.500 1 L6.300 7.500 Z" fill="#cfcfcf"/><path d="M16.500 10 A7 7 0 0 1 2.500 11" fill="none" stroke="#cfcfcf" stroke-width="1.400" stroke-dasharray="1.400 1.800"/></svg>
<svg style="left:43px;top:252px" width="20" height="18" viewBox="0 0 20 18"><rect x="6.700" y="0.700" width="12.600" height="10.600" fill="none" stroke="#cfcfcf" stroke-width="1.300"/><rect x="0.700" y="8.200" width="9.600" height="9" fill="#535353" stroke="#cfcfcf" stroke-width="1.300"/><path d="M10.500 8 L16 3 M12.500 2.800 H16.300 V6.500" fill="none" stroke="#cfcfcf" stroke-width="1.300"/></svg>
<svg style="left:31px;top:267px" width="4" height="4" viewBox="0 0 4 4"><path d="M4 0 V4 H0 Z" fill="#cfcfcf"/></svg>
<svg style="left:62px;top:267px" width="4" height="4" viewBox="0 0 4 4"><path d="M4 0 V4 H0 Z" fill="#cfcfcf"/></svg>
<svg style="left:12px;top:276px" width="21" height="17" viewBox="0 0 21 17"><path d="M1.500 15 C5 12,4 6,7 2 C8.500 4,9.500 8.500,12 8 C15 7.500,16 4,20 4.500 C19 9,15 12.500,10.500 12 C7 11.500,5 13.500,1.500 15 Z" fill="#cfcfcf"/><circle cx="2" cy="15" r="1.500" fill="#535353" stroke="#cfcfcf" stroke-width="0.900"/><circle cx="7" cy="2.200" r="1.300" fill="#535353" stroke="#cfcfcf" stroke-width="0.900"/><circle cx="12" cy="6" r="1.300" fill="#535353" stroke="#cfcfcf" stroke-width="0.900"/></svg>
<svg style="left:42px;top:276px" width="21" height="17" viewBox="0 0 21 17"><rect x="5.500" y="2.500" width="14" height="11" fill="none" stroke="#cfcfcf" stroke-width="1.200" stroke-dasharray="2 1.500"/><rect x="18" y="1" width="2.600" height="2.600" fill="#cfcfcf"/><rect x="18" y="12" width="2.600" height="2.600" fill="#cfcfcf"/><rect x="11" y="12.300" width="2.600" height="2.600" fill="#cfcfcf"/><rect x="11" y="1" width="2.600" height="2.600" fill="#cfcfcf"/><path d="M0.500 0.500 L0.500 14.500 L4 10.800 L10.500 10 Z" fill="#cfcfcf"/></svg>
<svg style="left:31px;top:291px" width="4" height="4" viewBox="0 0 4 4"><path d="M4 0 V4 H0 Z" fill="#cfcfcf"/></svg>
<svg style="left:62px;top:291px" width="4" height="4" viewBox="0 0 4 4"><path d="M4 0 V4 H0 Z" fill="#cfcfcf"/></svg>
<svg style="left:12px;top:301px" width="21" height="18" viewBox="0 0 21 18"><path d="M4 9.500 A4.300 4.300 0 0 1 6.500 2 A6 6 0 0 1 17 4.500 Q19 7 16 9" fill="none" stroke="#cfcfcf" stroke-width="1.300"/><path d="M4 9.500 Q6 11 9.500 10.500" fill="none" stroke="#cfcfcf" stroke-width="1.300"/><path d="M5.500 6 h6" stroke="#cfcfcf" stroke-width="1" stroke-dasharray="1 1.200"/><path d="M11.500 5.500 L11.500 17.500 L14.500 14.300 L20.500 13.800 Z" fill="#cfcfcf"/></svg>
<svg style="left:42px;top:302px" width="22" height="17" viewBox="0 0 22 17"><path d="M1 1 L13 5 V11.500 L1 15.500 Z M5 2.300 V14.200 M9 3.700 V12.800 M1 6 L13 7.300 M1 10.500 L13 9.500" fill="none" stroke="#cfcfcf" stroke-width="1.100"/><path d="M12 9.500 H18 M10 12 H20 M7 14.300 H21.500 M1 16.500 H22" stroke="#9a9a9a" stroke-width="1"/></svg>
<svg style="left:31px;top:316px" width="4" height="4" viewBox="0 0 4 4"><path d="M4 0 V4 H0 Z" fill="#cfcfcf"/></svg>
<svg style="left:62px;top:316px" width="4" height="4" viewBox="0 0 4 4"><path d="M4 0 V4 H0 Z" fill="#cfcfcf"/></svg>
<svg style="left:13px;top:328px" width="18" height="15" viewBox="0 0 18 15"><rect x="0.700" y="0.700" width="16.600" height="13.600" fill="none" stroke="#cfcfcf" stroke-width="1.400"/><path d="M1 5 Q6 3,9 7 T17 9 M6 1 Q4 6,7.500 8 T7 14 M12 1 Q10 4,12.500 7 T12 14 M1 10.500 Q4 8.500,7.500 11" fill="none" stroke="#cfcfcf" stroke-width="1.100"/></svg>
<div class="abs" style="left:44px;top:328px;width:18px;height:15px;border:1.400px solid #cfcfcf;background:linear-gradient(to right,#1e1e1e,#d8d8d8)"></div>
<svg style="left:12px;top:350px" width="19" height="19" viewBox="0 0 19 19"><path d="M2 17.500 L3 13.500 L10.500 6 L13 8.500 L5.500 16 Z" fill="none" stroke="#cfcfcf" stroke-width="1.300" stroke-linejoin="round"/><path d="M9.500 4.500 L14.500 9.500 M11.500 6.500 L14.500 2 Q16.500 0.500 17.800 2.500 Q18.500 4 17 5 L13 8" fill="#cfcfcf" stroke="#cfcfcf" stroke-width="1.800" stroke-linecap="round"/></svg>
<svg style="left:43px;top:352px" width="20" height="16" viewBox="0 0 20 16"><rect x="0.500" y="0.500" width="8" height="8" fill="#cfcfcf"/><circle cx="10" cy="8" r="4.300" fill="#8a8a8a" stroke="#535353" stroke-width="0.800"/><circle cx="14.500" cy="10.500" r="4.300" fill="#535353" stroke="#cfcfcf" stroke-width="1.300"/></svg>
<svg style="left:31px;top:366px" width="4" height="4" viewBox="0 0 4 4"><path d="M4 0 V4 H0 Z" fill="#cfcfcf"/></svg>
<svg style="left:12px;top:376px" width="20" height="18" viewBox="0 0 20 18"><path d="M1 1 h1.500 v1.500 h-1.500 Z M4 1 h1.500 v1.500 h-1.500 Z M7 1 h1.500 v1.500 h-1.500 Z M1 4 h1.500 v1.500 h-1.500 Z M4 4 h1.500 v1.500 h-1.500 Z M1 7 h1.500 v1.500 h-1.500 Z" fill="#cfcfcf"/><path d="M10.500 1.500 h5.500 v3 h-5.500 Z" fill="#cfcfcf"/><rect x="9.200" y="5.700" width="9.600" height="11.600" rx="1.300" fill="none" stroke="#cfcfcf" stroke-width="1.400"/><circle cx="14" cy="11.500" r="2.300" fill="none" stroke="#cfcfcf" stroke-width="1.300"/></svg>
<svg style="left:44px;top:376px" width="19" height="17" viewBox="0 0 19 17"><path d="M1 0 V16.300 H19" fill="none" stroke="#cfcfcf" stroke-width="1.300"/><rect x="4" y="8" width="3" height="8" fill="#cfcfcf"/><rect x="9" y="2" width="3" height="14" fill="#cfcfcf"/><rect x="14" y="5.500" width="3" height="10.500" fill="#cfcfcf"/></svg>
<svg style="left:31px;top:391px" width="4" height="4" viewBox="0 0 4 4"><path d="M4 0 V4 H0 Z" fill="#cfcfcf"/></svg>
<svg style="left:62px;top:391px" width="4" height="4" viewBox="0 0 4 4"><path d="M4 0 V4 H0 Z" fill="#cfcfcf"/></svg>
<svg style="left:12px;top:401px" width="19" height="18" viewBox="0 0 19 18"><path d="M5.500 0 V5 M0 5.500 H6" stroke="#cfcfcf" stroke-width="1.200"/><path d="M6.500 6.500 H14.500 L18 10 V17 H6.500 Z" fill="#7d7d7d" stroke="#cfcfcf" stroke-width="1.300"/><path d="M14.500 6.500 V10 H18" fill="none" stroke="#cfcfcf" stroke-width="1"/></svg>
<svg style="left:44px;top:401px" width="18" height="18" viewBox="0 0 18 18"><path d="M1 17 L11 3.500 L15 7 Z" fill="none" stroke="#cfcfcf" stroke-width="1.300" stroke-linejoin="round"/><path d="M11.500 3 L14 0.500 L17.500 4 L15.500 6.500 Z" fill="#cfcfcf"/></svg>
<svg style="left:62px;top:415px" width="4" height="4" viewBox="0 0 4 4"><path d="M4 0 V4 H0 Z" fill="#cfcfcf"/></svg>
<svg style="left:12px;top:424px" width="19" height="19" viewBox="0 0 19 19"><path d="M5 11 V4 Q5 2.500 6.200 2.500 Q7.400 2.500 7.400 4 V2 Q7.400 0.500 8.700 0.500 Q10 0.500 10 2 V3 Q10 1.500 11.300 1.500 Q12.600 1.500 12.600 3 V5 Q12.600 3.800 13.800 3.800 Q15 3.800 15 5.200 V12 Q15 18.500 10 18.500 Q6.500 18.500 4.500 15 L1 10 Q0.500 8.500 2 8.200 Q3 8 5 11 Z" fill="#cfcfcf"/></svg>
<svg style="left:44px;top:424px" width="18" height="19" viewBox="0 0 18 19"><circle cx="7" cy="7" r="5.800" fill="none" stroke="#cfcfcf" stroke-width="1.500"/><path d="M11 11.500 L17 18" stroke="#cfcfcf" stroke-width="2.200"/></svg>
<svg style="left:31px;top:440px" width="4" height="4" viewBox="0 0 4 4"><path d="M4 0 V4 H0 Z" fill="#cfcfcf"/></svg>
<svg style="left:26px;top:473px" width="36" height="36" viewBox="0 0 36 36"><rect x="0.500" y="0.500" width="35" height="35" fill="#000" stroke="#d0d0d0"/><rect x="9.500" y="9.500" width="17" height="17" fill="#535353" stroke="#d0d0d0"/></svg>
<svg style="left:7px;top:454px" width="36" height="36" viewBox="0 0 36 36"><rect x="0.500" y="0.500" width="35" height="35" fill="#fff" stroke="#cfcfcf"/><path d="M1 35 L35 1" stroke="#e11a1f" stroke-width="2.400"/></svg>
<svg style="left:52px;top:455px" width="13" height="13" viewBox="0 0 13 13"><path d="M3 5.500 Q8 2.500 10 9" fill="none" stroke="#cfcfcf" stroke-width="1.700"/><path d="M0.500 4 L5.500 1.500 L5.500 7 Z M7 9 L12.800 8 L10.800 12.800 Z" fill="#cfcfcf"/></svg>
<svg style="left:7px;top:497px" width="12" height="12" viewBox="0 0 12 12"><rect x="4" y="4" width="7.500" height="7.500" fill="#000" stroke="#cfcfcf" stroke-width="1"/><rect x="0.500" y="0.500" width="7.500" height="7.500" fill="#fff" stroke="#000" stroke-width="1"/></svg>
<div class="abs" style="left:6px;top:517px;width:61px;height:21px;border:1px solid #5d5d5d"></div>
<div class="abs" style="left:9px;top:520px;width:15px;height:15px;background:#000;border:1px solid #3a3a3a"></div>
<div class="abs" style="left:30px;top:520px;width:15px;height:15px;background:linear-gradient(to right,#fff,#2a2a2a);border:1px solid #3a3a3a"></div>
<div class="abs" style="left:47px;top:517px;width:20px;height:21px;background:#353535"></div>
<svg style="left:50px;top:520px" width="15" height="15" viewBox="0 0 15 15"><rect width="15" height="15" fill="#fff"/><path d="M0.500 14.500 L14.500 0.500" stroke="#e11a1f" stroke-width="2.200"/></svg>
<div class="abs" style="left:6px;top:542px;width:61px;height:19px;border:1px solid #5d5d5d"></div>
<div class="abs" style="left:7px;top:543px;width:20px;height:17px;background:#353535"></div>
<svg style="left:10px;top:545px" width="14" height="13" viewBox="0 0 14 13"><circle cx="5.500" cy="5.500" r="4.500" fill="#8c8c8c" stroke="#cfcfcf" stroke-width="1.200"/><rect x="6.500" y="6.500" width="6.500" height="6" fill="#cfcfcf"/></svg>
<svg style="left:30px;top:545px" width="14" height="13" viewBox="0 0 14 13"><rect x="6.500" y="6.500" width="6.500" height="6" fill="#cfcfcf"/><circle cx="5.500" cy="5.500" r="4.500" fill="#8c8c8c" stroke="#cfcfcf" stroke-width="1.200"/></svg>
<svg style="left:51px;top:545px" width="14" height="13" viewBox="0 0 14 13"><circle cx="6" cy="6" r="4.500" fill="none" stroke="#6e6e6e" stroke-width="1.200"/><path d="M6 6 L6 2.500 A3.500 3.500 0 0 1 9.500 6 Z" fill="#6e6e6e"/></svg>
<svg style="left:26px;top:570px" width="24" height="18" viewBox="0 0 24 18"><rect x="8.600" y="0.600" width="14.800" height="11.800" fill="#8a8a8a" stroke="#cfcfcf" stroke-width="1.200"/><rect x="8.600" y="0.600" width="14.800" height="2.500" fill="#cfcfcf"/><rect x="0.600" y="5.600" width="13.800" height="11.800" fill="#8a8a8a" stroke="#cfcfcf" stroke-width="1.200"/><rect x="0.600" y="5.600" width="13.800" height="2.500" fill="#cfcfcf"/></svg>
<div class="abs more" style="left:30px;top:610px"><i style="left:0;width:4.200px;height:4.200px"></i><i style="left:5.700px;width:4.200px;height:4.200px"></i><i style="left:11.400px;width:4.200px;height:4.200px"></i></div>

<!-- STATUS BAR -->
<div class="abs" style="left:76px;top:876px;width:76px;height:17px;background:#454545"></div>
<div class="t" style="left:82px;top:880px;font-size:11.5px;color:#e4e4e4;transform:scaleX(0.923);transform-origin:0 0">66.67%</div>
<div class="abs" style="left:130px;top:876px;width:1px;height:17px;background:#5a5a5a"></div>
<svg style="left:135px;top:883px" width="10" height="6" viewBox="0 0 10 6"><path d="M1 1 L5 5 L9 1" fill="none" stroke="#dedede" stroke-width="1.400"/></svg>
<div class="abs" style="left:152px;top:876px;width:1px;height:17px;background:#3d3d3d"></div>
<svg style="left:159px;top:880px" width="9" height="9" viewBox="0 0 9 9"><rect x="0" y="0" width="1.500" height="9" fill="#757575"/><path d="M8.500 0 V9 L2.500 4.500 Z" fill="#757575"/></svg>
<svg style="left:177px;top:880px" width="7" height="9" viewBox="0 0 7 9"><path d="M6.500 0 V9 L0.500 4.500 Z" fill="#757575"/></svg>
<div class="abs" style="left:191px;top:876px;width:62px;height:17px;background:#454545"></div>
<div class="t" style="left:195px;top:880px;font-size:11.500px;color:#e4e4e4">1</div>
<div class="abs" style="left:233px;top:876px;width:1px;height:17px;background:#5a5a5a"></div>
<svg style="left:238px;top:883px" width="10" height="6" viewBox="0 0 10 6"><path d="M1 1 L5 5 L9 1" fill="none" stroke="#dedede" stroke-width="1.400"/></svg>
<svg style="left:262px;top:880px" width="7" height="9" viewBox="0 0 7 9"><path d="M0.500 0 V9 L6.500 4.500 Z" fill="#757575"/></svg>
<svg style="left:279px;top:880px" width="9" height="9" viewBox="0 0 9 9"><path d="M0.500 0 V9 L6.500 4.500 Z" fill="#757575"/><rect x="7.500" y="0" width="1.500" height="9" fill="#757575"/></svg>
<div class="abs" style="left:296px;top:876px;width:1px;height:17px;background:#3d3d3d"></div>
<div class="t" style="left:366px;top:880px;font-size:11.5px;color:#d6d6d6;transform:scaleX(0.882);transform-origin:0 0">Direct Selection</div>
<svg style="left:511px;top:880px" width="7" height="9" viewBox="0 0 7 9"><path d="M0.500 0 V9 L6.500 4.500 Z" fill="#dcdcdc"/></svg>
<div class="abs" style="left:523px;top:876px;width:1px;height:17px;background:#3d3d3d"></div>
<svg style="left:528px;top:880px" width="6" height="9" viewBox="0 0 6 9"><path d="M5 0.800 L1.200 4.500 L5 8.200" fill="none" stroke="#cfcfcf" stroke-width="1.200"/></svg>
<div class="abs" style="left:870px;top:877px;width:27px;height:15px;background:#606060;border-radius:8px"></div>
<svg style="left:1255px;top:880px" width="6" height="9" viewBox="0 0 6 9"><path d="M1 0.800 L4.800 4.500 L1 8.200" fill="none" stroke="#cfcfcf" stroke-width="1.200"/></svg>
<div class="abs" style="left:1267px;top:876px;width:17px;height:17px;background:#535353"></div>
<svg style="left:1270px;top:103px" width="11" height="7" viewBox="0 0 11 7"><path d="M2 5.500 L5.500 2 L9 5.500" fill="none" stroke="#c4c4c4" stroke-width="1.100"/></svg>
<svg style="left:1270px;top:864px" width="11" height="7" viewBox="0 0 11 7"><path d="M2 1.500 L5.500 5 L9 1.500" fill="none" stroke="#c4c4c4" stroke-width="1.100"/></svg>
<div class="abs" style="left:1268px;top:472px;width:15px;height:27px;background:#606060;border-radius:8px"></div>

<!-- RIGHT ICON STRIP -->
<svg style="left:1311px;top:68.5px" width="10" height="7.500" viewBox="0 0 12 9"><path d="M5 0.800 L1.500 4.500 L5 8.200 M10.500 0.800 L7 4.500 L10.500 8.200" fill="none" stroke="#c2c2c2" stroke-width="1.100"/></svg>
<svg style="left:1572px;top:68.5px" width="10" height="7.500" viewBox="0 0 12 9"><path d="M1.500 0.800 L5 4.500 L1.500 8.200 M7 0.800 L10.500 4.500 L7 8.200" fill="none" stroke="#c2c2c2" stroke-width="1.100"/></svg>
<div class="abs" style="left:1287px;top:150px;width:38px;height:1px;background:#3a3a3a"></div>
<div class="abs" style="left:1287px;top:250px;width:38px;height:1px;background:#3a3a3a"></div>
<div class="abs" style="left:1287px;top:351px;width:38px;height:1px;background:#3a3a3a"></div>
<div class="abs" style="left:1287px;top:422px;width:38px;height:1px;background:#3a3a3a"></div>
<div class="abs" style="left:1287px;top:522px;width:38px;height:1px;background:#3a3a3a"></div>
<div class="abs" style="left:1287px;top:594px;width:38px;height:1px;background:#3a3a3a"></div>
<div class="abs" style="left:1287px;top:636px;width:38px;height:1px;background:#3a3a3a"></div>
<div class="abs" style="left:1297px;top:82px;width:20px;height:4px;background:repeating-linear-gradient(to right,#424242 0,#424242 1px,#535353 1px,#535353 2px)"></div>
<div class="abs" style="left:1297px;top:154px;width:20px;height:4px;background:repeating-linear-gradient(to right,#424242 0,#424242 1px,#535353 1px,#535353 2px)"></div>
<div class="abs" style="left:1297px;top:254px;width:20px;height:4px;background:repeating-linear-gradient(to right,#424242 0,#424242 1px,#535353 1px,#535353 2px)"></div>
<div class="abs" style="left:1297px;top:355px;width:20px;height:4px;background:repeating-linear-gradient(to right,#424242 0,#424242 1px,#535353 1px,#535353 2px)"></div>
<div class="abs" style="left:1297px;top:426px;width:20px;height:4px;background:repeating-linear-gradient(to right,#424242 0,#424242 1px,#535353 1px,#535353 2px)"></div>
<div class="abs" style="left:1297px;top:526px;width:20px;height:4px;background:repeating-linear-gradient(to right,#424242 0,#424242 1px,#535353 1px,#535353 2px)"></div>
<div class="abs" style="left:1297px;top:598px;width:20px;height:4px;background:repeating-linear-gradient(to right,#424242 0,#424242 1px,#535353 1px,#535353 2px)"></div>
<svg style="left:1296px;top:95px" width="22" height="16" viewBox="0 0 22 16"><path d="M11 0.500 C17 0.500,21.500 3.500,21.500 8 C21.500 12,17 15.500,11 15.500 C6 15.500,0.500 13,0.500 8.500 C0.500 6,3 6.500,4.500 5.500 C6 4.500,5 0.500,11 0.500 Z" fill="#cfcfcf"/><circle cx="6" cy="10" r="1.600" fill="#535353"/><circle cx="10.500" cy="12" r="1.600" fill="#535353"/><circle cx="15" cy="11" r="1.600" fill="#535353"/><circle cx="17.500" cy="7.500" r="1.600" fill="#535353"/><circle cx="15.500" cy="4" r="1.400" fill="#535353"/></svg>
<svg style="left:1298px;top:123px" width="19" height="18" viewBox="0 0 19 18"><path d="M1 1 C9 1,17 8,18 17 L1 17 Z" fill="#3a3a3a"/><path d="M1 17 L1 1 C4 1,7 2,9.500 3.500 Z" fill="#2a2a2a"/><path d="M1 17 L9.500 3.500 C12 5,14 7,15.500 9.500 Z" fill="#6a6a6a"/><path d="M1 17 L15.500 9.500 C17 12,17.800 14.500,18 17 Z" fill="#b5b5b5"/><path d="M1 1 C9 1,17 8,18 17 L1 17 Z" fill="none" stroke="#cfcfcf" stroke-width="1.400"/></svg>
<svg style="left:1297px;top:166px" width="20" height="15" viewBox="0 0 20 15"><rect x="0" y="0" width="20" height="15" fill="#cfcfcf"/><rect x="2" y="2" width="4" height="4" fill="#6a6a6a"/><rect x="8" y="2" width="4" height="4" fill="#6a6a6a"/><rect x="14" y="2" width="4" height="4" fill="#6a6a6a"/><rect x="2" y="8.500" width="4" height="4" fill="#6a6a6a"/><rect x="8" y="8.500" width="4" height="4" fill="#6a6a6a"/><rect x="14" y="8.500" width="4" height="4" fill="#6a6a6a"/></svg>
<svg style="left:1298px;top:192px" width="18" height="22" viewBox="0 0 18 22"><rect x="4.500" y="13" width="9" height="8.500" fill="#cfcfcf"/><path d="M6 12 L3 4 M9 12 L9 2 M12 12 L16 5" stroke="#cfcfcf" stroke-width="1.600"/><circle cx="3" cy="4" r="2" fill="#cfcfcf"/><path d="M7.500 0 h3 v5 h-3 Z" fill="#cfcfcf"/><path d="M14 2.500 L18 4.500 L16 8 L13 6 Z" fill="#cfcfcf"/></svg>
<svg style="left:1298px;top:223px" width="18" height="20" viewBox="0 0 18 20"><circle cx="9" cy="5" r="4.300" fill="#cfcfcf"/><circle cx="4.700" cy="10.500" r="4.300" fill="#cfcfcf"/><circle cx="13.300" cy="10.500" r="4.300" fill="#cfcfcf"/><path d="M8 9 h2 L10.500 17 L14 19.500 H4 L7.500 17 Z" fill="#cfcfcf"/></svg>
<svg style="left:1298px;top:268px" width="19" height="15" viewBox="0 0 19 15"><rect x="0" y="0" width="19" height="2" fill="#cfcfcf"/><rect x="0" y="5.500" width="19" height="3" fill="#cfcfcf"/><rect x="0" y="11" width="19" height="4" fill="#cfcfcf"/></svg>
<div class="abs" style="left:1298px;top:297px;width:19px;height:14px;border:1.400px solid #cfcfcf;background:linear-gradient(to right,#1e1e1e,#d8d8d8)"></div>
<svg style="left:1297px;top:325px" width="20" height="18" viewBox="0 0 20 18"><circle cx="7.500" cy="7.500" r="7" fill="#cfcfcf"/><circle cx="12" cy="10.500" r="6.500" fill="#8f8f8f" stroke="#cfcfcf" stroke-width="1.200"/></svg>
<svg style="left:1297px;top:366px" width="20" height="20" viewBox="0 0 20 20"><circle cx="10" cy="10" r="6.500" fill="#cfcfcf"/><circle cx="10" cy="10" r="9" fill="none" stroke="#cfcfcf" stroke-width="1.200" stroke-dasharray="1.500 1.700"/></svg>
<svg style="left:1298px;top:396px" width="19" height="19" viewBox="0 0 19 19"><rect x="5.700" y="0.700" width="12.600" height="12.600" fill="none" stroke="#cfcfcf" stroke-width="1.400"/><rect x="0.700" y="8.700" width="6" height="6" fill="#535353" stroke="#cfcfcf" stroke-width="1.300"/><rect x="4.200" y="12.200" width="6" height="6" fill="#535353" stroke="#cfcfcf" stroke-width="1.300"/></svg>
<svg style="left:1298px;top:438px" width="19" height="18" viewBox="0 0 19 18"><path d="M9.500 0.500 L18.500 5.700 L9.500 11 L0.500 5.700 Z" fill="#cfcfcf"/><path d="M2 10.500 L9.500 15 L17 10.500" fill="none" stroke="#cfcfcf" stroke-width="2"/></svg>
<svg style="left:1298px;top:466px" width="19" height="19" viewBox="0 0 19 19"><path d="M7.500 3 H1 V18 H16 V11.500" fill="none" stroke="#cfcfcf" stroke-width="1.600"/><path d="M8 11 L17.500 1.500 M10.500 1 H18 V8.500" fill="none" stroke="#cfcfcf" stroke-width="1.600"/></svg>
<svg style="left:1298px;top:496px" width="19" height="18" viewBox="0 0 19 18"><rect x="0.700" y="0.700" width="12.600" height="10.600" fill="none" stroke="#cfcfcf" stroke-width="1.400"/><rect x="5.700" y="6.700" width="12.600" height="10.600" fill="#535353" stroke="#cfcfcf" stroke-width="1.400"/></svg>
<svg style="left:1298px;top:539px" width="18" height="18" viewBox="0 0 18 18"><rect x="2.500" y="2.500" width="13" height="13" fill="none" stroke="#cfcfcf" stroke-width="1.200" stroke-dasharray="2 1.700"/><rect x="0.500" y="0.500" width="3.500" height="3.500" fill="#cfcfcf"/><rect x="14" y="0.500" width="3.500" height="3.500" fill="#cfcfcf"/><rect x="0.500" y="14" width="3.500" height="3.500" fill="#cfcfcf"/><rect x="14" y="14" width="3.500" height="3.500" fill="#cfcfcf"/><rect x="8" y="8" width="2" height="2" fill="#cfcfcf"/></svg>
<svg style="left:1298px;top:566px" width="18" height="19" viewBox="0 0 18 19"><rect x="0" y="0" width="1.400" height="19" fill="#cfcfcf"/><rect x="3.500" y="3" width="8" height="5.500" fill="#cfcfcf"/><rect x="3.500" y="11" width="14" height="5.500" fill="#cfcfcf"/></svg>
<svg style="left:1298px;top:611px" width="17" height="16" viewBox="0 0 17 16"><rect x="0.500" y="0.500" width="8" height="7.500" fill="#cfcfcf"/><rect x="4.500" y="4.500" width="8" height="7.500" fill="#8c8c8c" stroke="#535353" stroke-width="1"/><rect x="8.500" y="8" width="8" height="7.500" fill="#cfcfcf" stroke="#535353" stroke-width="1"/></svg>

<!-- PROPERTIES PANEL -->
<div class="abs" style="left:1329px;top:79px;width:259px;height:28px;background:#484848"></div>
<div class="abs" style="left:1329px;top:79px;width:69px;height:28px;background:#535353"></div>
<div class="abs" style="left:1398px;top:79px;width:1px;height:28px;background:#3f3f3f"></div>
<div class="abs" style="left:1456px;top:79px;width:1px;height:28px;background:#3f3f3f"></div>
<div class="abs" style="left:1536px;top:79px;width:1px;height:28px;background:#3f3f3f"></div>
<div class="abs" style="left:1537px;top:79px;width:51px;height:28px;background:#424242"></div>
<div class="abs" style="left:1398px;top:106px;width:190px;height:1px;background:#3f3f3f"></div>
<div class="t" style="left:1338px;top:88px;font-size:11px;color:#ffffff;letter-spacing:-0.34px;font-weight:bold">Properties</div>
<div class="t" style="left:1406px;top:88px;font-size:11px;color:#bdbdbd;letter-spacing:-0.5px;font-weight:bold">Libraries</div>
<div class="t" style="left:1467px;top:88px;font-size:11px;color:#bdbdbd;letter-spacing:-0.24px;font-weight:bold">Image Trace</div>
<div class="t" style="left:1338px;top:119.5px;font-size:11.5px;color:#d0d0d0;transform:scaleX(0.845);transform-origin:0 0;">Path</div>
<div class="div" style="top:141px"></div>
<div class="t" style="left:1338px;top:152.5px;font-size:11.5px;color:#d0d0d0;transform:scaleX(0.866);transform-origin:0 0;">Transform</div>
<svg style="left:1338px;top:187px" width="21" height="21" viewBox="0 0 21 21"><path d="M2.500 2.500 H18.500 V18.500 H2.500 Z M2.500 10.500 H18.500 M10.500 2.500 V18.500" fill="none" stroke="#cfcfcf" stroke-width="1"/><rect x="0.6" y="0.6" width="3.800" height="3.800" fill="#535353" stroke="#cfcfcf" stroke-width="1.100"/><rect x="0.6" y="8.6" width="3.800" height="3.800" fill="#535353" stroke="#cfcfcf" stroke-width="1.100"/><rect x="0.6" y="16.6" width="3.800" height="3.800" fill="#535353" stroke="#cfcfcf" stroke-width="1.100"/><rect x="8.6" y="0.6" width="3.800" height="3.800" fill="#535353" stroke="#cfcfcf" stroke-width="1.100"/><rect x="8.6" y="8.6" width="3.800" height="3.800" fill="#f0f0f0" stroke="#cfcfcf" stroke-width="1.100"/><rect x="8.6" y="16.6" width="3.800" height="3.800" fill="#535353" stroke="#cfcfcf" stroke-width="1.100"/><rect x="16.6" y="0.6" width="3.800" height="3.800" fill="#535353" stroke="#cfcfcf" stroke-width="1.100"/><rect x="16.6" y="8.6" width="3.800" height="3.800" fill="#535353" stroke="#cfcfcf" stroke-width="1.100"/><rect x="16.6" y="16.6" width="3.800" height="3.800" fill="#535353" stroke="#cfcfcf" stroke-width="1.100"/></svg>
<div class="t" style="left:1373px;top:178px;font-size:11.5px;color:#cfcfcf;letter-spacing:-0.3px;">X:</div>
<div class="abs" style="left:1387px;top:174px;width:57px;height:20px;background:#454545;border:1px solid #5e5e5e;border-radius:2px"></div>
<div class="t" style="left:1391px;top:178px;font-size:11.5px;color:#ececec;transform:scaleX(0.925);transform-origin:0 0;">32.496 in</div>
<div class="t" style="left:1374px;top:205px;font-size:11.5px;color:#cfcfcf;letter-spacing:-0.3px;">Y:</div>
<div class="abs" style="left:1387px;top:201px;width:57px;height:20px;background:#454545;border:1px solid #5e5e5e;border-radius:2px"></div>
<div class="t" style="left:1391px;top:205px;font-size:11.5px;color:#ececec;transform:scaleX(0.925);transform-origin:0 0;">32.457 in</div>
<div class="t" style="left:1460px;top:178px;font-size:11.5px;color:#cfcfcf;letter-spacing:-0.3px;">W:</div>
<div class="abs" style="left:1477px;top:174px;width:57px;height:20px;background:#454545;border:1px solid #5e5e5e;border-radius:2px"></div>
<div class="t" style="left:1481px;top:178px;font-size:11.5px;color:#ececec;transform:scaleX(0.925);transform-origin:0 0;">26.5 in</div>
<div class="t" style="left:1462px;top:205px;font-size:11.5px;color:#cfcfcf;letter-spacing:-0.3px;">H:</div>
<div class="abs" style="left:1477px;top:201px;width:57px;height:20px;background:#454545;border:1px solid #5e5e5e;border-radius:2px"></div>
<div class="t" style="left:1481px;top:205px;font-size:11.5px;color:#ececec;transform:scaleX(0.925);transform-origin:0 0;">34.5 in</div>
<svg style="left:1547px;top:189px" width="18" height="19" viewBox="0 0 18 19"><path d="M6.300 7 V5.500 A2.700 2.700 0 0 1 11.700 5.500 V7 M11.700 11.500 V13.500 A2.700 2.700 0 0 1 6.300 13.500 V11.500" fill="none" stroke="#cfcfcf" stroke-width="1.600"/><path d="M1.500 2 L16.500 17" stroke="#cfcfcf" stroke-width="1.400"/></svg>
<svg style="left:1369px;top:231px" width="15" height="10" viewBox="0 0 15 10"><path d="M10 0.800 L1 8.700 H12" fill="none" stroke="#cfcfcf" stroke-width="1.200"/><path d="M7 3.500 Q9.500 5.500 9.500 8.700" fill="none" stroke="#cfcfcf" stroke-width="1"/></svg>
<div class="t" style="left:1383px;top:231px;font-size:11.5px;color:#cfcfcf;letter-spacing:0px;">:</div>
<div class="abs" style="left:1387px;top:228px;width:39px;height:20px;background:#454545;border:1px solid #5e5e5e;border-radius:2px"></div>
<div class="t" style="left:1390px;top:233px;font-size:11.5px;color:#ececec;letter-spacing:-0.3px;">0°</div>
<div class="abs" style="left:1425px;top:228px;width:19px;height:20px;background:#4b4b4b;border:1px solid #5e5e5e;border-radius:2px"></div>
<svg style="left:1430px;top:235px" width="10" height="6" viewBox="0 0 10 6"><path d="M1 1 L5.0 5 L9 1" fill="none" stroke="#dedede" stroke-width="1.4"/></svg>
<svg style="left:1483px;top:234px" width="15" height="11" viewBox="0 0 15 11"><path d="M1 1 L5.500 5.500 L1 10 Z" fill="none" stroke="#cfcfcf" stroke-width="1.200"/><path d="M14 1 L9.500 5.500 L14 10 Z" fill="#cfcfcf"/><path d="M7.500 0 V11" stroke="#cfcfcf" stroke-width="0.900" stroke-dasharray="1 1"/></svg>
<svg style="left:1514px;top:232px" width="12" height="15" viewBox="0 0 12 15"><path d="M1 1 L6 5.500 L11 1 Z" fill="#cfcfcf"/><path d="M1.500 14 L6 9.500 L10.500 14 Z" fill="none" stroke="#cfcfcf" stroke-width="1.200"/><path d="M0 7.500 H12" stroke="#cfcfcf" stroke-width="0.900" stroke-dasharray="1 1"/></svg>
<div class="abs more" style="left:1558px;top:258px"><i style="left:0;width:4px;height:4px"></i><i style="left:5.500px;width:4px;height:4px"></i><i style="left:11px;width:4px;height:4px"></i></div>
<div class="div" style="top:274px"></div>
<div class="t" style="left:1338px;top:287.5px;font-size:11.5px;color:#d0d0d0;transform:scaleX(0.871);transform-origin:0 0;">Appearance</div>
<svg style="left:1339px;top:311px" width="18" height="18" viewBox="0 0 18 18"><rect x="0.500" y="0.500" width="17" height="17" fill="#fff" stroke="#bdbdbd"/><path d="M1.500 16.500 L16.500 1.500" stroke="#e11a1f" stroke-width="1.600"/></svg>
<div class="t" style="left:1370px;top:315.5px;font-size:11.5px;color:#d0d0d0;transform:scaleX(0.837);transform-origin:0 0;">Fill</div>
<svg style="left:1339px;top:341px" width="18" height="18" viewBox="0 0 18 18"><rect x="0.500" y="0.500" width="17" height="17" fill="#000" stroke="#d8d8d8"/><rect x="5.500" y="5.500" width="7" height="7" fill="#2a2a2a" stroke="#e8e8e8"/></svg>
<div class="t" style="left:1370px;top:345px;font-size:11.5px;color:#e2e2e2;transform:scaleX(0.8825);transform-origin:0 0;"><span class="dot">Stroke</span></div>
<div class="abs" style="left:1414px;top:340px;width:18px;height:20px;background:#4b4b4b;border:1px solid #5e5e5e;border-radius:2px"></div>
<svg style="left:1418px;top:342px" width="11" height="16" viewBox="0 0 11 16"><path d="M1.500 5.500 L5.500 1.800 L9.500 5.500 M1.500 10.500 L5.500 14.200 L9.500 10.500" fill="none" stroke="#dedede" stroke-width="1.300"/></svg>
<div class="abs" style="left:1432px;top:340px;width:34px;height:20px;background:#454545;border:1px solid #5e5e5e;border-radius:2px"></div>
<div class="t" style="left:1435px;top:344px;font-size:11.5px;color:#ececec;transform:scaleX(0.92);transform-origin:0 0;">0.5 pt</div>
<div class="abs" style="left:1466px;top:340px;width:19px;height:20px;background:#4b4b4b;border:1px solid #5e5e5e;border-radius:2px"></div>
<svg style="left:1471px;top:347px" width="10" height="6" viewBox="0 0 10 6"><path d="M1 1 L5.0 5 L9 1" fill="none" stroke="#dedede" stroke-width="1.4"/></svg>
<svg style="left:1339px;top:371px" width="18" height="18" viewBox="0 0 18 18"><rect x="0.500" y="0.500" width="17" height="17" fill="#5e5e5e" stroke="#9a9a9a"/><rect x="2.0" y="2.0" width="3.500" height="3.500" fill="#7e7e7e"/><rect x="2.0" y="9.0" width="3.500" height="3.500" fill="#7e7e7e"/><rect x="5.5" y="5.5" width="3.500" height="3.500" fill="#7e7e7e"/><rect x="5.5" y="12.5" width="3.500" height="3.500" fill="#7e7e7e"/><rect x="9.0" y="2.0" width="3.500" height="3.500" fill="#7e7e7e"/><rect x="9.0" y="9.0" width="3.500" height="3.500" fill="#7e7e7e"/><rect x="12.5" y="5.5" width="3.500" height="3.500" fill="#7e7e7e"/><rect x="12.5" y="12.5" width="3.500" height="3.500" fill="#7e7e7e"/></svg>
<div class="t" style="left:1370px;top:375px;font-size:11.5px;color:#e2e2e2;transform:scaleX(0.872);transform-origin:0 0;"><span class="dot">Opacity</span></div>
<div class="abs" style="left:1414px;top:370px;width:52px;height:20px;background:#454545;border:1px solid #5e5e5e;border-radius:2px"></div>
<div class="t" style="left:1417px;top:374px;font-size:11.5px;color:#ececec;transform:scaleX(0.93);transform-origin:0 0;">100%</div>
<div class="abs" style="left:1466px;top:370px;width:19px;height:20px;background:#4b4b4b;border:1px solid #5e5e5e;border-radius:2px"></div>
<svg style="left:1472px;top:375px" width="6" height="10" viewBox="0 0 6 10"><path d="M1 1 L5 5 L1 9" fill="none" stroke="#dedede" stroke-width="1.400"/></svg>
<div class="t" style="left:1345px;top:401px;font-size:14px;color:#d0d0d0;letter-spacing:-0.5px;font-style:italic">fx</div>
<div class="abs" style="left:1357px;top:413px;width:2px;height:2px;background:#cfcfcf"></div>
<div class="abs more" style="left:1558px;top:432px"><i style="left:0;width:4px;height:4px"></i><i style="left:5.500px;width:4px;height:4px"></i><i style="left:11px;width:4px;height:4px"></i></div>
<div class="div" style="top:448px"></div>
<div class="t" style="left:1338px;top:460.5px;font-size:11.5px;color:#d0d0d0;transform:scaleX(0.879);transform-origin:0 0;">Align</div>
<svg style="left:1341px;top:488px" width="26" height="16" viewBox="0 0 26 16"><rect x="1" y="1" width="13" height="13" fill="none" stroke="#cfcfcf" stroke-width="1.200" stroke-dasharray="1.600 1.600"/><rect x="6.500" y="6.500" width="2" height="2" fill="#cfcfcf"/><path d="M17.500 6.500 L21 10 L24.500 6.500" fill="none" stroke="#cfcfcf" stroke-width="1.100"/></svg>
<svg style="left:1380px;top:487px" width="18" height="19" viewBox="0 0 18 19"><rect x="0" y="0" width="1.300" height="19" fill="#cfcfcf"/><rect x="3" y="2.500" width="8" height="5.500" fill="#cfcfcf"/><rect x="3" y="10.500" width="14" height="5.500" fill="#cfcfcf"/></svg>
<svg style="left:1411px;top:487px" width="16" height="19" viewBox="0 0 16 19"><rect x="7.300" y="0" width="1.300" height="19" fill="#cfcfcf"/><rect x="4" y="2.500" width="8" height="5.500" fill="#cfcfcf"/><rect x="1" y="10.500" width="14" height="5.500" fill="#cfcfcf"/></svg>
<svg style="left:1442px;top:487px" width="18" height="19" viewBox="0 0 18 19"><rect x="16.200" y="0" width="1.300" height="19" fill="#cfcfcf"/><rect x="6.500" y="2.500" width="8" height="5.500" fill="#cfcfcf"/><rect x="0.500" y="10.500" width="14" height="5.500" fill="#cfcfcf"/></svg>
<svg style="left:1473px;top:488px" width="19" height="17" viewBox="0 0 19 17"><rect x="0" y="0" width="19" height="1.300" fill="#cfcfcf"/><rect x="3" y="3" width="5.500" height="13" fill="#cfcfcf"/><rect x="11" y="3" width="5.500" height="8" fill="#cfcfcf"/></svg>
<svg style="left:1504px;top:489px" width="19" height="15" viewBox="0 0 19 15"><rect x="0" y="6.800" width="19" height="1.300" fill="#cfcfcf"/><rect x="3" y="0.500" width="5.500" height="14" fill="#cfcfcf"/><rect x="11" y="3.500" width="5.500" height="8" fill="#cfcfcf"/></svg>
<svg style="left:1535px;top:488px" width="19" height="17" viewBox="0 0 19 17"><rect x="0" y="15.700" width="19" height="1.300" fill="#cfcfcf"/><rect x="3" y="1" width="5.500" height="13" fill="#cfcfcf"/><rect x="11" y="6" width="5.500" height="8" fill="#cfcfcf"/></svg>
<div class="abs more" style="left:1558px;top:521px"><i style="left:0;width:4px;height:4px"></i><i style="left:5.500px;width:4px;height:4px"></i><i style="left:11px;width:4px;height:4px"></i></div>
<div class="div" style="top:537px"></div>
<div class="t" style="left:1338px;top:549.5px;font-size:11.5px;color:#d0d0d0;transform:scaleX(0.897);transform-origin:0 0;">Pathfinder</div>
<svg style="left:1344px;top:577px" width="16" height="16" viewBox="0 0 16 16"><path d="M0.500 0.500 H10 V5.500 H15.500 V15.500 H5.500 V10.500 H0.500 Z" fill="#cfcfcf"/></svg>
<svg style="left:1376px;top:577px" width="16" height="16" viewBox="0 0 16 16"><path d="M0.500 0.500 H10 V5.500 H5.500 V10.500 H0.500 Z" fill="#cfcfcf"/><rect x="6" y="6" width="9.300" height="9.300" fill="none" stroke="#cfcfcf" stroke-width="1.200"/></svg>
<svg style="left:1408px;top:577px" width="16" height="16" viewBox="0 0 16 16"><rect x="0.700" y="0.700" width="9.300" height="9.300" fill="none" stroke="#cfcfcf" stroke-width="1.200"/><rect x="6" y="6" width="9.300" height="9.300" fill="none" stroke="#cfcfcf" stroke-width="1.200"/><rect x="6" y="6" width="4" height="4" fill="#cfcfcf"/></svg>
<svg style="left:1440px;top:577px" width="16" height="16" viewBox="0 0 16 16"><path d="M0.500 0.500 H10 V5.500 H5.500 V10.500 H0.500 Z" fill="#cfcfcf"/><path d="M15.500 15.500 H5.500 V10.500 H10 V5.500 H15.500 Z" fill="#cfcfcf"/><rect x="6" y="6" width="4" height="4" fill="#535353" stroke="#cfcfcf" stroke-width="0.800"/></svg>
<div class="abs" style="left:1523px;top:575px;width:54px;height:22px;background:#5a5a5a;border-radius:3px"></div>
<div class="t" style="left:1533px;top:580.5px;font-size:11.5px;color:#777;transform:scaleX(0.859);transform-origin:0 0;">Expand</div>
<div class="abs more" style="left:1558px;top:605px"><i style="left:0;width:4px;height:4px"></i><i style="left:5.500px;width:4px;height:4px"></i><i style="left:11px;width:4px;height:4px"></i></div>
<div class="div" style="top:621px"></div>
<div class="t" style="left:1338px;top:639.5px;font-size:11.5px;color:#d0d0d0;transform:scaleX(0.89);transform-origin:0 0;">Quick Actions</div>
<div class="btn" style="left:1339px;top:661px;width:104px;font-size:11.5px"><span style="display:inline-block;transform:scaleX(0.87)">Offset Path</span></div>
<div class="btn" style="left:1452px;top:661px;width:104px;font-size:11.5px"><span style="display:inline-block;transform:scaleX(0.87)">Group</span></div>
<div class="btn" style="left:1339px;top:693px;width:217px;font-size:11.5px"><span style="display:inline-block;transform:scaleX(0.85)">Recolor</span></div>

</div>
</body>
</html>
